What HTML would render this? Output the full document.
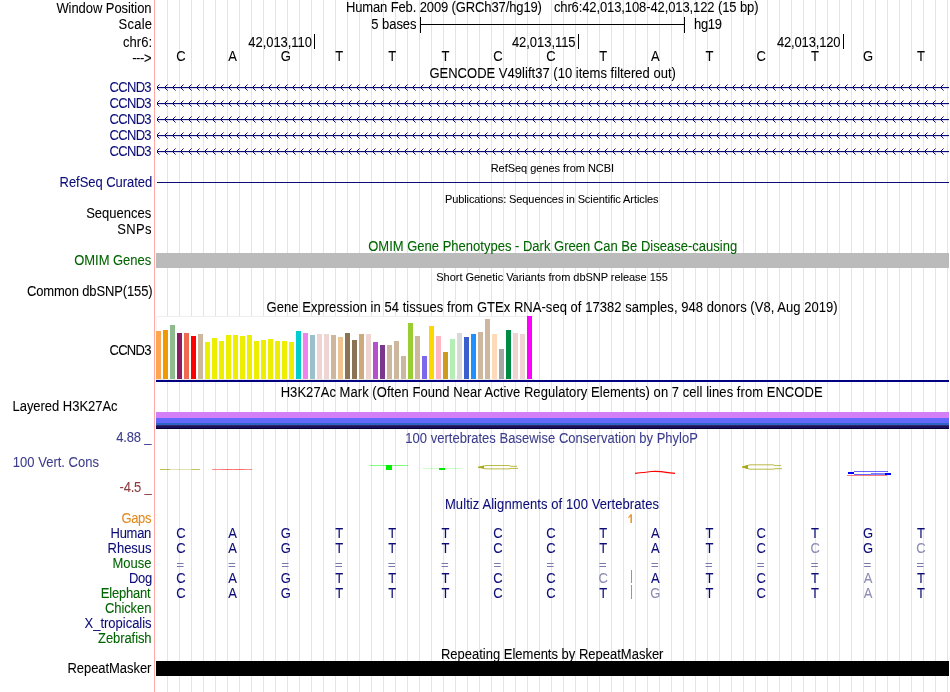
<!DOCTYPE html>
<html><head><meta charset="utf-8"><style>
html,body{margin:0;padding:0;background:#fff;width:950px;height:692px;overflow:hidden}
svg{display:block;will-change:transform}
text{font-family:"Liberation Sans",sans-serif;stroke:currentColor;stroke-width:0.06}
</style></head><body>
<svg width="950" height="692" viewBox="0 0 950 692">
<rect width="950" height="692" fill="#fff"/>
<rect x="167" y="0" width="1" height="692" fill="#e0e0ff"/><rect x="179" y="0" width="1" height="692" fill="#e0e0ff"/><rect x="191" y="0" width="1" height="692" fill="#e0e0ff"/><rect x="203" y="0" width="1" height="692" fill="#e0e0ff"/><rect x="215" y="0" width="1" height="692" fill="#e0e0ff"/><rect x="227" y="0" width="1" height="692" fill="#e0e0ff"/><rect x="239" y="0" width="1" height="692" fill="#e0e0ff"/><rect x="251" y="0" width="1" height="692" fill="#e0e0ff"/><rect x="263" y="0" width="1" height="692" fill="#e0e0ff"/><rect x="275" y="0" width="1" height="692" fill="#e0e0ff"/><rect x="287" y="0" width="1" height="692" fill="#e0e0ff"/><rect x="299" y="0" width="1" height="692" fill="#e0e0ff"/><rect x="311" y="0" width="1" height="692" fill="#e0e0ff"/><rect x="323" y="0" width="1" height="692" fill="#e0e0ff"/><rect x="335" y="0" width="1" height="692" fill="#e0e0ff"/><rect x="347" y="0" width="1" height="692" fill="#e0e0ff"/><rect x="359" y="0" width="1" height="692" fill="#e0e0ff"/><rect x="371" y="0" width="1" height="692" fill="#e0e0ff"/><rect x="383" y="0" width="1" height="692" fill="#e0e0ff"/><rect x="395" y="0" width="1" height="692" fill="#e0e0ff"/><rect x="407" y="0" width="1" height="692" fill="#e0e0ff"/><rect x="419" y="0" width="1" height="692" fill="#e0e0ff"/><rect x="431" y="0" width="1" height="692" fill="#e0e0ff"/><rect x="443" y="0" width="1" height="692" fill="#e0e0ff"/><rect x="455" y="0" width="1" height="692" fill="#e0e0ff"/><rect x="467" y="0" width="1" height="692" fill="#e0e0ff"/><rect x="479" y="0" width="1" height="692" fill="#e0e0ff"/><rect x="491" y="0" width="1" height="692" fill="#e0e0ff"/><rect x="503" y="0" width="1" height="692" fill="#e0e0ff"/><rect x="515" y="0" width="1" height="692" fill="#e0e0ff"/><rect x="527" y="0" width="1" height="692" fill="#e0e0ff"/><rect x="539" y="0" width="1" height="692" fill="#e0e0ff"/><rect x="551" y="0" width="1" height="692" fill="#e0e0ff"/><rect x="563" y="0" width="1" height="692" fill="#e0e0ff"/><rect x="575" y="0" width="1" height="692" fill="#e0e0ff"/><rect x="587" y="0" width="1" height="692" fill="#e0e0ff"/><rect x="599" y="0" width="1" height="692" fill="#e0e0ff"/><rect x="611" y="0" width="1" height="692" fill="#e0e0ff"/><rect x="623" y="0" width="1" height="692" fill="#e0e0ff"/><rect x="635" y="0" width="1" height="692" fill="#e0e0ff"/><rect x="647" y="0" width="1" height="692" fill="#e0e0ff"/><rect x="659" y="0" width="1" height="692" fill="#e0e0ff"/><rect x="671" y="0" width="1" height="692" fill="#e0e0ff"/><rect x="683" y="0" width="1" height="692" fill="#e0e0ff"/><rect x="695" y="0" width="1" height="692" fill="#e0e0ff"/><rect x="707" y="0" width="1" height="692" fill="#e0e0ff"/><rect x="719" y="0" width="1" height="692" fill="#e0e0ff"/><rect x="731" y="0" width="1" height="692" fill="#e0e0ff"/><rect x="743" y="0" width="1" height="692" fill="#e0e0ff"/><rect x="755" y="0" width="1" height="692" fill="#e0e0ff"/><rect x="767" y="0" width="1" height="692" fill="#e0e0ff"/><rect x="779" y="0" width="1" height="692" fill="#e0e0ff"/><rect x="791" y="0" width="1" height="692" fill="#e0e0ff"/><rect x="803" y="0" width="1" height="692" fill="#e0e0ff"/><rect x="815" y="0" width="1" height="692" fill="#e0e0ff"/><rect x="827" y="0" width="1" height="692" fill="#e0e0ff"/><rect x="839" y="0" width="1" height="692" fill="#e0e0ff"/><rect x="851" y="0" width="1" height="692" fill="#e0e0ff"/><rect x="863" y="0" width="1" height="692" fill="#e0e0ff"/><rect x="875" y="0" width="1" height="692" fill="#e0e0ff"/><rect x="887" y="0" width="1" height="692" fill="#e0e0ff"/><rect x="899" y="0" width="1" height="692" fill="#e0e0ff"/><rect x="911" y="0" width="1" height="692" fill="#e0e0ff"/><rect x="923" y="0" width="1" height="692" fill="#e0e0ff"/><rect x="935" y="0" width="1" height="692" fill="#e0e0ff"/><rect x="947" y="0" width="1" height="692" fill="#e0e0ff"/><rect x="154" y="0" width="1" height="692" fill="#ffa8a8"/><rect x="420" y="17" width="1" height="16" fill="#000"/><rect x="684" y="17" width="1" height="16" fill="#000"/><rect x="420" y="24" width="265" height="1" fill="#000"/><rect x="314" y="34" width="1" height="15" fill="#000"/><rect x="578" y="34" width="1" height="15" fill="#000"/><rect x="843" y="34" width="1" height="15" fill="#000"/><rect x="157" y="87" width="792" height="1" fill="#0c0c78"/><rect x="157" y="88" width="792" height="1" fill="#0c0c78" fill-opacity="0.15"/><path d="M157,86h1v3h-1zM158,85h1v1h-1zM158,89h1v1h-1zM165,86h1v3h-1zM166,85h1v1h-1zM166,89h1v1h-1zM173,86h1v3h-1zM174,85h1v1h-1zM174,89h1v1h-1zM181,86h1v3h-1zM182,85h1v1h-1zM182,89h1v1h-1zM189,86h1v3h-1zM190,85h1v1h-1zM190,89h1v1h-1zM197,86h1v3h-1zM198,85h1v1h-1zM198,89h1v1h-1zM205,86h1v3h-1zM206,85h1v1h-1zM206,89h1v1h-1zM213,86h1v3h-1zM214,85h1v1h-1zM214,89h1v1h-1zM221,86h1v3h-1zM222,85h1v1h-1zM222,89h1v1h-1zM229,86h1v3h-1zM230,85h1v1h-1zM230,89h1v1h-1zM237,86h1v3h-1zM238,85h1v1h-1zM238,89h1v1h-1zM245,86h1v3h-1zM246,85h1v1h-1zM246,89h1v1h-1zM253,86h1v3h-1zM254,85h1v1h-1zM254,89h1v1h-1zM261,86h1v3h-1zM262,85h1v1h-1zM262,89h1v1h-1zM269,86h1v3h-1zM270,85h1v1h-1zM270,89h1v1h-1zM277,86h1v3h-1zM278,85h1v1h-1zM278,89h1v1h-1zM285,86h1v3h-1zM286,85h1v1h-1zM286,89h1v1h-1zM293,86h1v3h-1zM294,85h1v1h-1zM294,89h1v1h-1zM301,86h1v3h-1zM302,85h1v1h-1zM302,89h1v1h-1zM309,86h1v3h-1zM310,85h1v1h-1zM310,89h1v1h-1zM317,86h1v3h-1zM318,85h1v1h-1zM318,89h1v1h-1zM325,86h1v3h-1zM326,85h1v1h-1zM326,89h1v1h-1zM333,86h1v3h-1zM334,85h1v1h-1zM334,89h1v1h-1zM341,86h1v3h-1zM342,85h1v1h-1zM342,89h1v1h-1zM349,86h1v3h-1zM350,85h1v1h-1zM350,89h1v1h-1zM357,86h1v3h-1zM358,85h1v1h-1zM358,89h1v1h-1zM365,86h1v3h-1zM366,85h1v1h-1zM366,89h1v1h-1zM373,86h1v3h-1zM374,85h1v1h-1zM374,89h1v1h-1zM381,86h1v3h-1zM382,85h1v1h-1zM382,89h1v1h-1zM389,86h1v3h-1zM390,85h1v1h-1zM390,89h1v1h-1zM397,86h1v3h-1zM398,85h1v1h-1zM398,89h1v1h-1zM405,86h1v3h-1zM406,85h1v1h-1zM406,89h1v1h-1zM413,86h1v3h-1zM414,85h1v1h-1zM414,89h1v1h-1zM421,86h1v3h-1zM422,85h1v1h-1zM422,89h1v1h-1zM429,86h1v3h-1zM430,85h1v1h-1zM430,89h1v1h-1zM437,86h1v3h-1zM438,85h1v1h-1zM438,89h1v1h-1zM445,86h1v3h-1zM446,85h1v1h-1zM446,89h1v1h-1zM453,86h1v3h-1zM454,85h1v1h-1zM454,89h1v1h-1zM461,86h1v3h-1zM462,85h1v1h-1zM462,89h1v1h-1zM469,86h1v3h-1zM470,85h1v1h-1zM470,89h1v1h-1zM477,86h1v3h-1zM478,85h1v1h-1zM478,89h1v1h-1zM485,86h1v3h-1zM486,85h1v1h-1zM486,89h1v1h-1zM493,86h1v3h-1zM494,85h1v1h-1zM494,89h1v1h-1zM501,86h1v3h-1zM502,85h1v1h-1zM502,89h1v1h-1zM509,86h1v3h-1zM510,85h1v1h-1zM510,89h1v1h-1zM517,86h1v3h-1zM518,85h1v1h-1zM518,89h1v1h-1zM525,86h1v3h-1zM526,85h1v1h-1zM526,89h1v1h-1zM533,86h1v3h-1zM534,85h1v1h-1zM534,89h1v1h-1zM541,86h1v3h-1zM542,85h1v1h-1zM542,89h1v1h-1zM549,86h1v3h-1zM550,85h1v1h-1zM550,89h1v1h-1zM557,86h1v3h-1zM558,85h1v1h-1zM558,89h1v1h-1zM565,86h1v3h-1zM566,85h1v1h-1zM566,89h1v1h-1zM573,86h1v3h-1zM574,85h1v1h-1zM574,89h1v1h-1zM581,86h1v3h-1zM582,85h1v1h-1zM582,89h1v1h-1zM589,86h1v3h-1zM590,85h1v1h-1zM590,89h1v1h-1zM597,86h1v3h-1zM598,85h1v1h-1zM598,89h1v1h-1zM605,86h1v3h-1zM606,85h1v1h-1zM606,89h1v1h-1zM613,86h1v3h-1zM614,85h1v1h-1zM614,89h1v1h-1zM621,86h1v3h-1zM622,85h1v1h-1zM622,89h1v1h-1zM629,86h1v3h-1zM630,85h1v1h-1zM630,89h1v1h-1zM637,86h1v3h-1zM638,85h1v1h-1zM638,89h1v1h-1zM645,86h1v3h-1zM646,85h1v1h-1zM646,89h1v1h-1zM653,86h1v3h-1zM654,85h1v1h-1zM654,89h1v1h-1zM661,86h1v3h-1zM662,85h1v1h-1zM662,89h1v1h-1zM669,86h1v3h-1zM670,85h1v1h-1zM670,89h1v1h-1zM677,86h1v3h-1zM678,85h1v1h-1zM678,89h1v1h-1zM685,86h1v3h-1zM686,85h1v1h-1zM686,89h1v1h-1zM693,86h1v3h-1zM694,85h1v1h-1zM694,89h1v1h-1zM701,86h1v3h-1zM702,85h1v1h-1zM702,89h1v1h-1zM709,86h1v3h-1zM710,85h1v1h-1zM710,89h1v1h-1zM717,86h1v3h-1zM718,85h1v1h-1zM718,89h1v1h-1zM725,86h1v3h-1zM726,85h1v1h-1zM726,89h1v1h-1zM733,86h1v3h-1zM734,85h1v1h-1zM734,89h1v1h-1zM741,86h1v3h-1zM742,85h1v1h-1zM742,89h1v1h-1zM749,86h1v3h-1zM750,85h1v1h-1zM750,89h1v1h-1zM757,86h1v3h-1zM758,85h1v1h-1zM758,89h1v1h-1zM765,86h1v3h-1zM766,85h1v1h-1zM766,89h1v1h-1zM773,86h1v3h-1zM774,85h1v1h-1zM774,89h1v1h-1zM781,86h1v3h-1zM782,85h1v1h-1zM782,89h1v1h-1zM789,86h1v3h-1zM790,85h1v1h-1zM790,89h1v1h-1zM797,86h1v3h-1zM798,85h1v1h-1zM798,89h1v1h-1zM805,86h1v3h-1zM806,85h1v1h-1zM806,89h1v1h-1zM813,86h1v3h-1zM814,85h1v1h-1zM814,89h1v1h-1zM821,86h1v3h-1zM822,85h1v1h-1zM822,89h1v1h-1zM829,86h1v3h-1zM830,85h1v1h-1zM830,89h1v1h-1zM837,86h1v3h-1zM838,85h1v1h-1zM838,89h1v1h-1zM845,86h1v3h-1zM846,85h1v1h-1zM846,89h1v1h-1zM853,86h1v3h-1zM854,85h1v1h-1zM854,89h1v1h-1zM861,86h1v3h-1zM862,85h1v1h-1zM862,89h1v1h-1zM869,86h1v3h-1zM870,85h1v1h-1zM870,89h1v1h-1zM877,86h1v3h-1zM878,85h1v1h-1zM878,89h1v1h-1zM885,86h1v3h-1zM886,85h1v1h-1zM886,89h1v1h-1zM893,86h1v3h-1zM894,85h1v1h-1zM894,89h1v1h-1zM901,86h1v3h-1zM902,85h1v1h-1zM902,89h1v1h-1zM909,86h1v3h-1zM910,85h1v1h-1zM910,89h1v1h-1zM917,86h1v3h-1zM918,85h1v1h-1zM918,89h1v1h-1zM925,86h1v3h-1zM926,85h1v1h-1zM926,89h1v1h-1zM933,86h1v3h-1zM934,85h1v1h-1zM934,89h1v1h-1zM941,86h1v3h-1zM942,85h1v1h-1zM942,89h1v1h-1z" fill="#0c0c78"/><path d="M159,84h1v1h-1zM159,90h1v1h-1zM167,84h1v1h-1zM167,90h1v1h-1zM175,84h1v1h-1zM175,90h1v1h-1zM183,84h1v1h-1zM183,90h1v1h-1zM191,84h1v1h-1zM191,90h1v1h-1zM199,84h1v1h-1zM199,90h1v1h-1zM207,84h1v1h-1zM207,90h1v1h-1zM215,84h1v1h-1zM215,90h1v1h-1zM223,84h1v1h-1zM223,90h1v1h-1zM231,84h1v1h-1zM231,90h1v1h-1zM239,84h1v1h-1zM239,90h1v1h-1zM247,84h1v1h-1zM247,90h1v1h-1zM255,84h1v1h-1zM255,90h1v1h-1zM263,84h1v1h-1zM263,90h1v1h-1zM271,84h1v1h-1zM271,90h1v1h-1zM279,84h1v1h-1zM279,90h1v1h-1zM287,84h1v1h-1zM287,90h1v1h-1zM295,84h1v1h-1zM295,90h1v1h-1zM303,84h1v1h-1zM303,90h1v1h-1zM311,84h1v1h-1zM311,90h1v1h-1zM319,84h1v1h-1zM319,90h1v1h-1zM327,84h1v1h-1zM327,90h1v1h-1zM335,84h1v1h-1zM335,90h1v1h-1zM343,84h1v1h-1zM343,90h1v1h-1zM351,84h1v1h-1zM351,90h1v1h-1zM359,84h1v1h-1zM359,90h1v1h-1zM367,84h1v1h-1zM367,90h1v1h-1zM375,84h1v1h-1zM375,90h1v1h-1zM383,84h1v1h-1zM383,90h1v1h-1zM391,84h1v1h-1zM391,90h1v1h-1zM399,84h1v1h-1zM399,90h1v1h-1zM407,84h1v1h-1zM407,90h1v1h-1zM415,84h1v1h-1zM415,90h1v1h-1zM423,84h1v1h-1zM423,90h1v1h-1zM431,84h1v1h-1zM431,90h1v1h-1zM439,84h1v1h-1zM439,90h1v1h-1zM447,84h1v1h-1zM447,90h1v1h-1zM455,84h1v1h-1zM455,90h1v1h-1zM463,84h1v1h-1zM463,90h1v1h-1zM471,84h1v1h-1zM471,90h1v1h-1zM479,84h1v1h-1zM479,90h1v1h-1zM487,84h1v1h-1zM487,90h1v1h-1zM495,84h1v1h-1zM495,90h1v1h-1zM503,84h1v1h-1zM503,90h1v1h-1zM511,84h1v1h-1zM511,90h1v1h-1zM519,84h1v1h-1zM519,90h1v1h-1zM527,84h1v1h-1zM527,90h1v1h-1zM535,84h1v1h-1zM535,90h1v1h-1zM543,84h1v1h-1zM543,90h1v1h-1zM551,84h1v1h-1zM551,90h1v1h-1zM559,84h1v1h-1zM559,90h1v1h-1zM567,84h1v1h-1zM567,90h1v1h-1zM575,84h1v1h-1zM575,90h1v1h-1zM583,84h1v1h-1zM583,90h1v1h-1zM591,84h1v1h-1zM591,90h1v1h-1zM599,84h1v1h-1zM599,90h1v1h-1zM607,84h1v1h-1zM607,90h1v1h-1zM615,84h1v1h-1zM615,90h1v1h-1zM623,84h1v1h-1zM623,90h1v1h-1zM631,84h1v1h-1zM631,90h1v1h-1zM639,84h1v1h-1zM639,90h1v1h-1zM647,84h1v1h-1zM647,90h1v1h-1zM655,84h1v1h-1zM655,90h1v1h-1zM663,84h1v1h-1zM663,90h1v1h-1zM671,84h1v1h-1zM671,90h1v1h-1zM679,84h1v1h-1zM679,90h1v1h-1zM687,84h1v1h-1zM687,90h1v1h-1zM695,84h1v1h-1zM695,90h1v1h-1zM703,84h1v1h-1zM703,90h1v1h-1zM711,84h1v1h-1zM711,90h1v1h-1zM719,84h1v1h-1zM719,90h1v1h-1zM727,84h1v1h-1zM727,90h1v1h-1zM735,84h1v1h-1zM735,90h1v1h-1zM743,84h1v1h-1zM743,90h1v1h-1zM751,84h1v1h-1zM751,90h1v1h-1zM759,84h1v1h-1zM759,90h1v1h-1zM767,84h1v1h-1zM767,90h1v1h-1zM775,84h1v1h-1zM775,90h1v1h-1zM783,84h1v1h-1zM783,90h1v1h-1zM791,84h1v1h-1zM791,90h1v1h-1zM799,84h1v1h-1zM799,90h1v1h-1zM807,84h1v1h-1zM807,90h1v1h-1zM815,84h1v1h-1zM815,90h1v1h-1zM823,84h1v1h-1zM823,90h1v1h-1zM831,84h1v1h-1zM831,90h1v1h-1zM839,84h1v1h-1zM839,90h1v1h-1zM847,84h1v1h-1zM847,90h1v1h-1zM855,84h1v1h-1zM855,90h1v1h-1zM863,84h1v1h-1zM863,90h1v1h-1zM871,84h1v1h-1zM871,90h1v1h-1zM879,84h1v1h-1zM879,90h1v1h-1zM887,84h1v1h-1zM887,90h1v1h-1zM895,84h1v1h-1zM895,90h1v1h-1zM903,84h1v1h-1zM903,90h1v1h-1zM911,84h1v1h-1zM911,90h1v1h-1zM919,84h1v1h-1zM919,90h1v1h-1zM927,84h1v1h-1zM927,90h1v1h-1zM935,84h1v1h-1zM935,90h1v1h-1zM943,84h1v1h-1zM943,90h1v1h-1z" fill="#0c0c78" fill-opacity="0.55"/><rect x="157" y="103" width="792" height="1" fill="#0c0c78"/><rect x="157" y="104" width="792" height="1" fill="#0c0c78" fill-opacity="0.15"/><path d="M157,102h1v3h-1zM158,101h1v1h-1zM158,105h1v1h-1zM165,102h1v3h-1zM166,101h1v1h-1zM166,105h1v1h-1zM173,102h1v3h-1zM174,101h1v1h-1zM174,105h1v1h-1zM181,102h1v3h-1zM182,101h1v1h-1zM182,105h1v1h-1zM189,102h1v3h-1zM190,101h1v1h-1zM190,105h1v1h-1zM197,102h1v3h-1zM198,101h1v1h-1zM198,105h1v1h-1zM205,102h1v3h-1zM206,101h1v1h-1zM206,105h1v1h-1zM213,102h1v3h-1zM214,101h1v1h-1zM214,105h1v1h-1zM221,102h1v3h-1zM222,101h1v1h-1zM222,105h1v1h-1zM229,102h1v3h-1zM230,101h1v1h-1zM230,105h1v1h-1zM237,102h1v3h-1zM238,101h1v1h-1zM238,105h1v1h-1zM245,102h1v3h-1zM246,101h1v1h-1zM246,105h1v1h-1zM253,102h1v3h-1zM254,101h1v1h-1zM254,105h1v1h-1zM261,102h1v3h-1zM262,101h1v1h-1zM262,105h1v1h-1zM269,102h1v3h-1zM270,101h1v1h-1zM270,105h1v1h-1zM277,102h1v3h-1zM278,101h1v1h-1zM278,105h1v1h-1zM285,102h1v3h-1zM286,101h1v1h-1zM286,105h1v1h-1zM293,102h1v3h-1zM294,101h1v1h-1zM294,105h1v1h-1zM301,102h1v3h-1zM302,101h1v1h-1zM302,105h1v1h-1zM309,102h1v3h-1zM310,101h1v1h-1zM310,105h1v1h-1zM317,102h1v3h-1zM318,101h1v1h-1zM318,105h1v1h-1zM325,102h1v3h-1zM326,101h1v1h-1zM326,105h1v1h-1zM333,102h1v3h-1zM334,101h1v1h-1zM334,105h1v1h-1zM341,102h1v3h-1zM342,101h1v1h-1zM342,105h1v1h-1zM349,102h1v3h-1zM350,101h1v1h-1zM350,105h1v1h-1zM357,102h1v3h-1zM358,101h1v1h-1zM358,105h1v1h-1zM365,102h1v3h-1zM366,101h1v1h-1zM366,105h1v1h-1zM373,102h1v3h-1zM374,101h1v1h-1zM374,105h1v1h-1zM381,102h1v3h-1zM382,101h1v1h-1zM382,105h1v1h-1zM389,102h1v3h-1zM390,101h1v1h-1zM390,105h1v1h-1zM397,102h1v3h-1zM398,101h1v1h-1zM398,105h1v1h-1zM405,102h1v3h-1zM406,101h1v1h-1zM406,105h1v1h-1zM413,102h1v3h-1zM414,101h1v1h-1zM414,105h1v1h-1zM421,102h1v3h-1zM422,101h1v1h-1zM422,105h1v1h-1zM429,102h1v3h-1zM430,101h1v1h-1zM430,105h1v1h-1zM437,102h1v3h-1zM438,101h1v1h-1zM438,105h1v1h-1zM445,102h1v3h-1zM446,101h1v1h-1zM446,105h1v1h-1zM453,102h1v3h-1zM454,101h1v1h-1zM454,105h1v1h-1zM461,102h1v3h-1zM462,101h1v1h-1zM462,105h1v1h-1zM469,102h1v3h-1zM470,101h1v1h-1zM470,105h1v1h-1zM477,102h1v3h-1zM478,101h1v1h-1zM478,105h1v1h-1zM485,102h1v3h-1zM486,101h1v1h-1zM486,105h1v1h-1zM493,102h1v3h-1zM494,101h1v1h-1zM494,105h1v1h-1zM501,102h1v3h-1zM502,101h1v1h-1zM502,105h1v1h-1zM509,102h1v3h-1zM510,101h1v1h-1zM510,105h1v1h-1zM517,102h1v3h-1zM518,101h1v1h-1zM518,105h1v1h-1zM525,102h1v3h-1zM526,101h1v1h-1zM526,105h1v1h-1zM533,102h1v3h-1zM534,101h1v1h-1zM534,105h1v1h-1zM541,102h1v3h-1zM542,101h1v1h-1zM542,105h1v1h-1zM549,102h1v3h-1zM550,101h1v1h-1zM550,105h1v1h-1zM557,102h1v3h-1zM558,101h1v1h-1zM558,105h1v1h-1zM565,102h1v3h-1zM566,101h1v1h-1zM566,105h1v1h-1zM573,102h1v3h-1zM574,101h1v1h-1zM574,105h1v1h-1zM581,102h1v3h-1zM582,101h1v1h-1zM582,105h1v1h-1zM589,102h1v3h-1zM590,101h1v1h-1zM590,105h1v1h-1zM597,102h1v3h-1zM598,101h1v1h-1zM598,105h1v1h-1zM605,102h1v3h-1zM606,101h1v1h-1zM606,105h1v1h-1zM613,102h1v3h-1zM614,101h1v1h-1zM614,105h1v1h-1zM621,102h1v3h-1zM622,101h1v1h-1zM622,105h1v1h-1zM629,102h1v3h-1zM630,101h1v1h-1zM630,105h1v1h-1zM637,102h1v3h-1zM638,101h1v1h-1zM638,105h1v1h-1zM645,102h1v3h-1zM646,101h1v1h-1zM646,105h1v1h-1zM653,102h1v3h-1zM654,101h1v1h-1zM654,105h1v1h-1zM661,102h1v3h-1zM662,101h1v1h-1zM662,105h1v1h-1zM669,102h1v3h-1zM670,101h1v1h-1zM670,105h1v1h-1zM677,102h1v3h-1zM678,101h1v1h-1zM678,105h1v1h-1zM685,102h1v3h-1zM686,101h1v1h-1zM686,105h1v1h-1zM693,102h1v3h-1zM694,101h1v1h-1zM694,105h1v1h-1zM701,102h1v3h-1zM702,101h1v1h-1zM702,105h1v1h-1zM709,102h1v3h-1zM710,101h1v1h-1zM710,105h1v1h-1zM717,102h1v3h-1zM718,101h1v1h-1zM718,105h1v1h-1zM725,102h1v3h-1zM726,101h1v1h-1zM726,105h1v1h-1zM733,102h1v3h-1zM734,101h1v1h-1zM734,105h1v1h-1zM741,102h1v3h-1zM742,101h1v1h-1zM742,105h1v1h-1zM749,102h1v3h-1zM750,101h1v1h-1zM750,105h1v1h-1zM757,102h1v3h-1zM758,101h1v1h-1zM758,105h1v1h-1zM765,102h1v3h-1zM766,101h1v1h-1zM766,105h1v1h-1zM773,102h1v3h-1zM774,101h1v1h-1zM774,105h1v1h-1zM781,102h1v3h-1zM782,101h1v1h-1zM782,105h1v1h-1zM789,102h1v3h-1zM790,101h1v1h-1zM790,105h1v1h-1zM797,102h1v3h-1zM798,101h1v1h-1zM798,105h1v1h-1zM805,102h1v3h-1zM806,101h1v1h-1zM806,105h1v1h-1zM813,102h1v3h-1zM814,101h1v1h-1zM814,105h1v1h-1zM821,102h1v3h-1zM822,101h1v1h-1zM822,105h1v1h-1zM829,102h1v3h-1zM830,101h1v1h-1zM830,105h1v1h-1zM837,102h1v3h-1zM838,101h1v1h-1zM838,105h1v1h-1zM845,102h1v3h-1zM846,101h1v1h-1zM846,105h1v1h-1zM853,102h1v3h-1zM854,101h1v1h-1zM854,105h1v1h-1zM861,102h1v3h-1zM862,101h1v1h-1zM862,105h1v1h-1zM869,102h1v3h-1zM870,101h1v1h-1zM870,105h1v1h-1zM877,102h1v3h-1zM878,101h1v1h-1zM878,105h1v1h-1zM885,102h1v3h-1zM886,101h1v1h-1zM886,105h1v1h-1zM893,102h1v3h-1zM894,101h1v1h-1zM894,105h1v1h-1zM901,102h1v3h-1zM902,101h1v1h-1zM902,105h1v1h-1zM909,102h1v3h-1zM910,101h1v1h-1zM910,105h1v1h-1zM917,102h1v3h-1zM918,101h1v1h-1zM918,105h1v1h-1zM925,102h1v3h-1zM926,101h1v1h-1zM926,105h1v1h-1zM933,102h1v3h-1zM934,101h1v1h-1zM934,105h1v1h-1zM941,102h1v3h-1zM942,101h1v1h-1zM942,105h1v1h-1z" fill="#0c0c78"/><path d="M159,100h1v1h-1zM159,106h1v1h-1zM167,100h1v1h-1zM167,106h1v1h-1zM175,100h1v1h-1zM175,106h1v1h-1zM183,100h1v1h-1zM183,106h1v1h-1zM191,100h1v1h-1zM191,106h1v1h-1zM199,100h1v1h-1zM199,106h1v1h-1zM207,100h1v1h-1zM207,106h1v1h-1zM215,100h1v1h-1zM215,106h1v1h-1zM223,100h1v1h-1zM223,106h1v1h-1zM231,100h1v1h-1zM231,106h1v1h-1zM239,100h1v1h-1zM239,106h1v1h-1zM247,100h1v1h-1zM247,106h1v1h-1zM255,100h1v1h-1zM255,106h1v1h-1zM263,100h1v1h-1zM263,106h1v1h-1zM271,100h1v1h-1zM271,106h1v1h-1zM279,100h1v1h-1zM279,106h1v1h-1zM287,100h1v1h-1zM287,106h1v1h-1zM295,100h1v1h-1zM295,106h1v1h-1zM303,100h1v1h-1zM303,106h1v1h-1zM311,100h1v1h-1zM311,106h1v1h-1zM319,100h1v1h-1zM319,106h1v1h-1zM327,100h1v1h-1zM327,106h1v1h-1zM335,100h1v1h-1zM335,106h1v1h-1zM343,100h1v1h-1zM343,106h1v1h-1zM351,100h1v1h-1zM351,106h1v1h-1zM359,100h1v1h-1zM359,106h1v1h-1zM367,100h1v1h-1zM367,106h1v1h-1zM375,100h1v1h-1zM375,106h1v1h-1zM383,100h1v1h-1zM383,106h1v1h-1zM391,100h1v1h-1zM391,106h1v1h-1zM399,100h1v1h-1zM399,106h1v1h-1zM407,100h1v1h-1zM407,106h1v1h-1zM415,100h1v1h-1zM415,106h1v1h-1zM423,100h1v1h-1zM423,106h1v1h-1zM431,100h1v1h-1zM431,106h1v1h-1zM439,100h1v1h-1zM439,106h1v1h-1zM447,100h1v1h-1zM447,106h1v1h-1zM455,100h1v1h-1zM455,106h1v1h-1zM463,100h1v1h-1zM463,106h1v1h-1zM471,100h1v1h-1zM471,106h1v1h-1zM479,100h1v1h-1zM479,106h1v1h-1zM487,100h1v1h-1zM487,106h1v1h-1zM495,100h1v1h-1zM495,106h1v1h-1zM503,100h1v1h-1zM503,106h1v1h-1zM511,100h1v1h-1zM511,106h1v1h-1zM519,100h1v1h-1zM519,106h1v1h-1zM527,100h1v1h-1zM527,106h1v1h-1zM535,100h1v1h-1zM535,106h1v1h-1zM543,100h1v1h-1zM543,106h1v1h-1zM551,100h1v1h-1zM551,106h1v1h-1zM559,100h1v1h-1zM559,106h1v1h-1zM567,100h1v1h-1zM567,106h1v1h-1zM575,100h1v1h-1zM575,106h1v1h-1zM583,100h1v1h-1zM583,106h1v1h-1zM591,100h1v1h-1zM591,106h1v1h-1zM599,100h1v1h-1zM599,106h1v1h-1zM607,100h1v1h-1zM607,106h1v1h-1zM615,100h1v1h-1zM615,106h1v1h-1zM623,100h1v1h-1zM623,106h1v1h-1zM631,100h1v1h-1zM631,106h1v1h-1zM639,100h1v1h-1zM639,106h1v1h-1zM647,100h1v1h-1zM647,106h1v1h-1zM655,100h1v1h-1zM655,106h1v1h-1zM663,100h1v1h-1zM663,106h1v1h-1zM671,100h1v1h-1zM671,106h1v1h-1zM679,100h1v1h-1zM679,106h1v1h-1zM687,100h1v1h-1zM687,106h1v1h-1zM695,100h1v1h-1zM695,106h1v1h-1zM703,100h1v1h-1zM703,106h1v1h-1zM711,100h1v1h-1zM711,106h1v1h-1zM719,100h1v1h-1zM719,106h1v1h-1zM727,100h1v1h-1zM727,106h1v1h-1zM735,100h1v1h-1zM735,106h1v1h-1zM743,100h1v1h-1zM743,106h1v1h-1zM751,100h1v1h-1zM751,106h1v1h-1zM759,100h1v1h-1zM759,106h1v1h-1zM767,100h1v1h-1zM767,106h1v1h-1zM775,100h1v1h-1zM775,106h1v1h-1zM783,100h1v1h-1zM783,106h1v1h-1zM791,100h1v1h-1zM791,106h1v1h-1zM799,100h1v1h-1zM799,106h1v1h-1zM807,100h1v1h-1zM807,106h1v1h-1zM815,100h1v1h-1zM815,106h1v1h-1zM823,100h1v1h-1zM823,106h1v1h-1zM831,100h1v1h-1zM831,106h1v1h-1zM839,100h1v1h-1zM839,106h1v1h-1zM847,100h1v1h-1zM847,106h1v1h-1zM855,100h1v1h-1zM855,106h1v1h-1zM863,100h1v1h-1zM863,106h1v1h-1zM871,100h1v1h-1zM871,106h1v1h-1zM879,100h1v1h-1zM879,106h1v1h-1zM887,100h1v1h-1zM887,106h1v1h-1zM895,100h1v1h-1zM895,106h1v1h-1zM903,100h1v1h-1zM903,106h1v1h-1zM911,100h1v1h-1zM911,106h1v1h-1zM919,100h1v1h-1zM919,106h1v1h-1zM927,100h1v1h-1zM927,106h1v1h-1zM935,100h1v1h-1zM935,106h1v1h-1zM943,100h1v1h-1zM943,106h1v1h-1z" fill="#0c0c78" fill-opacity="0.55"/><rect x="157" y="119" width="792" height="1" fill="#0c0c78"/><rect x="157" y="120" width="792" height="1" fill="#0c0c78" fill-opacity="0.15"/><path d="M157,118h1v3h-1zM158,117h1v1h-1zM158,121h1v1h-1zM165,118h1v3h-1zM166,117h1v1h-1zM166,121h1v1h-1zM173,118h1v3h-1zM174,117h1v1h-1zM174,121h1v1h-1zM181,118h1v3h-1zM182,117h1v1h-1zM182,121h1v1h-1zM189,118h1v3h-1zM190,117h1v1h-1zM190,121h1v1h-1zM197,118h1v3h-1zM198,117h1v1h-1zM198,121h1v1h-1zM205,118h1v3h-1zM206,117h1v1h-1zM206,121h1v1h-1zM213,118h1v3h-1zM214,117h1v1h-1zM214,121h1v1h-1zM221,118h1v3h-1zM222,117h1v1h-1zM222,121h1v1h-1zM229,118h1v3h-1zM230,117h1v1h-1zM230,121h1v1h-1zM237,118h1v3h-1zM238,117h1v1h-1zM238,121h1v1h-1zM245,118h1v3h-1zM246,117h1v1h-1zM246,121h1v1h-1zM253,118h1v3h-1zM254,117h1v1h-1zM254,121h1v1h-1zM261,118h1v3h-1zM262,117h1v1h-1zM262,121h1v1h-1zM269,118h1v3h-1zM270,117h1v1h-1zM270,121h1v1h-1zM277,118h1v3h-1zM278,117h1v1h-1zM278,121h1v1h-1zM285,118h1v3h-1zM286,117h1v1h-1zM286,121h1v1h-1zM293,118h1v3h-1zM294,117h1v1h-1zM294,121h1v1h-1zM301,118h1v3h-1zM302,117h1v1h-1zM302,121h1v1h-1zM309,118h1v3h-1zM310,117h1v1h-1zM310,121h1v1h-1zM317,118h1v3h-1zM318,117h1v1h-1zM318,121h1v1h-1zM325,118h1v3h-1zM326,117h1v1h-1zM326,121h1v1h-1zM333,118h1v3h-1zM334,117h1v1h-1zM334,121h1v1h-1zM341,118h1v3h-1zM342,117h1v1h-1zM342,121h1v1h-1zM349,118h1v3h-1zM350,117h1v1h-1zM350,121h1v1h-1zM357,118h1v3h-1zM358,117h1v1h-1zM358,121h1v1h-1zM365,118h1v3h-1zM366,117h1v1h-1zM366,121h1v1h-1zM373,118h1v3h-1zM374,117h1v1h-1zM374,121h1v1h-1zM381,118h1v3h-1zM382,117h1v1h-1zM382,121h1v1h-1zM389,118h1v3h-1zM390,117h1v1h-1zM390,121h1v1h-1zM397,118h1v3h-1zM398,117h1v1h-1zM398,121h1v1h-1zM405,118h1v3h-1zM406,117h1v1h-1zM406,121h1v1h-1zM413,118h1v3h-1zM414,117h1v1h-1zM414,121h1v1h-1zM421,118h1v3h-1zM422,117h1v1h-1zM422,121h1v1h-1zM429,118h1v3h-1zM430,117h1v1h-1zM430,121h1v1h-1zM437,118h1v3h-1zM438,117h1v1h-1zM438,121h1v1h-1zM445,118h1v3h-1zM446,117h1v1h-1zM446,121h1v1h-1zM453,118h1v3h-1zM454,117h1v1h-1zM454,121h1v1h-1zM461,118h1v3h-1zM462,117h1v1h-1zM462,121h1v1h-1zM469,118h1v3h-1zM470,117h1v1h-1zM470,121h1v1h-1zM477,118h1v3h-1zM478,117h1v1h-1zM478,121h1v1h-1zM485,118h1v3h-1zM486,117h1v1h-1zM486,121h1v1h-1zM493,118h1v3h-1zM494,117h1v1h-1zM494,121h1v1h-1zM501,118h1v3h-1zM502,117h1v1h-1zM502,121h1v1h-1zM509,118h1v3h-1zM510,117h1v1h-1zM510,121h1v1h-1zM517,118h1v3h-1zM518,117h1v1h-1zM518,121h1v1h-1zM525,118h1v3h-1zM526,117h1v1h-1zM526,121h1v1h-1zM533,118h1v3h-1zM534,117h1v1h-1zM534,121h1v1h-1zM541,118h1v3h-1zM542,117h1v1h-1zM542,121h1v1h-1zM549,118h1v3h-1zM550,117h1v1h-1zM550,121h1v1h-1zM557,118h1v3h-1zM558,117h1v1h-1zM558,121h1v1h-1zM565,118h1v3h-1zM566,117h1v1h-1zM566,121h1v1h-1zM573,118h1v3h-1zM574,117h1v1h-1zM574,121h1v1h-1zM581,118h1v3h-1zM582,117h1v1h-1zM582,121h1v1h-1zM589,118h1v3h-1zM590,117h1v1h-1zM590,121h1v1h-1zM597,118h1v3h-1zM598,117h1v1h-1zM598,121h1v1h-1zM605,118h1v3h-1zM606,117h1v1h-1zM606,121h1v1h-1zM613,118h1v3h-1zM614,117h1v1h-1zM614,121h1v1h-1zM621,118h1v3h-1zM622,117h1v1h-1zM622,121h1v1h-1zM629,118h1v3h-1zM630,117h1v1h-1zM630,121h1v1h-1zM637,118h1v3h-1zM638,117h1v1h-1zM638,121h1v1h-1zM645,118h1v3h-1zM646,117h1v1h-1zM646,121h1v1h-1zM653,118h1v3h-1zM654,117h1v1h-1zM654,121h1v1h-1zM661,118h1v3h-1zM662,117h1v1h-1zM662,121h1v1h-1zM669,118h1v3h-1zM670,117h1v1h-1zM670,121h1v1h-1zM677,118h1v3h-1zM678,117h1v1h-1zM678,121h1v1h-1zM685,118h1v3h-1zM686,117h1v1h-1zM686,121h1v1h-1zM693,118h1v3h-1zM694,117h1v1h-1zM694,121h1v1h-1zM701,118h1v3h-1zM702,117h1v1h-1zM702,121h1v1h-1zM709,118h1v3h-1zM710,117h1v1h-1zM710,121h1v1h-1zM717,118h1v3h-1zM718,117h1v1h-1zM718,121h1v1h-1zM725,118h1v3h-1zM726,117h1v1h-1zM726,121h1v1h-1zM733,118h1v3h-1zM734,117h1v1h-1zM734,121h1v1h-1zM741,118h1v3h-1zM742,117h1v1h-1zM742,121h1v1h-1zM749,118h1v3h-1zM750,117h1v1h-1zM750,121h1v1h-1zM757,118h1v3h-1zM758,117h1v1h-1zM758,121h1v1h-1zM765,118h1v3h-1zM766,117h1v1h-1zM766,121h1v1h-1zM773,118h1v3h-1zM774,117h1v1h-1zM774,121h1v1h-1zM781,118h1v3h-1zM782,117h1v1h-1zM782,121h1v1h-1zM789,118h1v3h-1zM790,117h1v1h-1zM790,121h1v1h-1zM797,118h1v3h-1zM798,117h1v1h-1zM798,121h1v1h-1zM805,118h1v3h-1zM806,117h1v1h-1zM806,121h1v1h-1zM813,118h1v3h-1zM814,117h1v1h-1zM814,121h1v1h-1zM821,118h1v3h-1zM822,117h1v1h-1zM822,121h1v1h-1zM829,118h1v3h-1zM830,117h1v1h-1zM830,121h1v1h-1zM837,118h1v3h-1zM838,117h1v1h-1zM838,121h1v1h-1zM845,118h1v3h-1zM846,117h1v1h-1zM846,121h1v1h-1zM853,118h1v3h-1zM854,117h1v1h-1zM854,121h1v1h-1zM861,118h1v3h-1zM862,117h1v1h-1zM862,121h1v1h-1zM869,118h1v3h-1zM870,117h1v1h-1zM870,121h1v1h-1zM877,118h1v3h-1zM878,117h1v1h-1zM878,121h1v1h-1zM885,118h1v3h-1zM886,117h1v1h-1zM886,121h1v1h-1zM893,118h1v3h-1zM894,117h1v1h-1zM894,121h1v1h-1zM901,118h1v3h-1zM902,117h1v1h-1zM902,121h1v1h-1zM909,118h1v3h-1zM910,117h1v1h-1zM910,121h1v1h-1zM917,118h1v3h-1zM918,117h1v1h-1zM918,121h1v1h-1zM925,118h1v3h-1zM926,117h1v1h-1zM926,121h1v1h-1zM933,118h1v3h-1zM934,117h1v1h-1zM934,121h1v1h-1zM941,118h1v3h-1zM942,117h1v1h-1zM942,121h1v1h-1z" fill="#0c0c78"/><path d="M159,116h1v1h-1zM159,122h1v1h-1zM167,116h1v1h-1zM167,122h1v1h-1zM175,116h1v1h-1zM175,122h1v1h-1zM183,116h1v1h-1zM183,122h1v1h-1zM191,116h1v1h-1zM191,122h1v1h-1zM199,116h1v1h-1zM199,122h1v1h-1zM207,116h1v1h-1zM207,122h1v1h-1zM215,116h1v1h-1zM215,122h1v1h-1zM223,116h1v1h-1zM223,122h1v1h-1zM231,116h1v1h-1zM231,122h1v1h-1zM239,116h1v1h-1zM239,122h1v1h-1zM247,116h1v1h-1zM247,122h1v1h-1zM255,116h1v1h-1zM255,122h1v1h-1zM263,116h1v1h-1zM263,122h1v1h-1zM271,116h1v1h-1zM271,122h1v1h-1zM279,116h1v1h-1zM279,122h1v1h-1zM287,116h1v1h-1zM287,122h1v1h-1zM295,116h1v1h-1zM295,122h1v1h-1zM303,116h1v1h-1zM303,122h1v1h-1zM311,116h1v1h-1zM311,122h1v1h-1zM319,116h1v1h-1zM319,122h1v1h-1zM327,116h1v1h-1zM327,122h1v1h-1zM335,116h1v1h-1zM335,122h1v1h-1zM343,116h1v1h-1zM343,122h1v1h-1zM351,116h1v1h-1zM351,122h1v1h-1zM359,116h1v1h-1zM359,122h1v1h-1zM367,116h1v1h-1zM367,122h1v1h-1zM375,116h1v1h-1zM375,122h1v1h-1zM383,116h1v1h-1zM383,122h1v1h-1zM391,116h1v1h-1zM391,122h1v1h-1zM399,116h1v1h-1zM399,122h1v1h-1zM407,116h1v1h-1zM407,122h1v1h-1zM415,116h1v1h-1zM415,122h1v1h-1zM423,116h1v1h-1zM423,122h1v1h-1zM431,116h1v1h-1zM431,122h1v1h-1zM439,116h1v1h-1zM439,122h1v1h-1zM447,116h1v1h-1zM447,122h1v1h-1zM455,116h1v1h-1zM455,122h1v1h-1zM463,116h1v1h-1zM463,122h1v1h-1zM471,116h1v1h-1zM471,122h1v1h-1zM479,116h1v1h-1zM479,122h1v1h-1zM487,116h1v1h-1zM487,122h1v1h-1zM495,116h1v1h-1zM495,122h1v1h-1zM503,116h1v1h-1zM503,122h1v1h-1zM511,116h1v1h-1zM511,122h1v1h-1zM519,116h1v1h-1zM519,122h1v1h-1zM527,116h1v1h-1zM527,122h1v1h-1zM535,116h1v1h-1zM535,122h1v1h-1zM543,116h1v1h-1zM543,122h1v1h-1zM551,116h1v1h-1zM551,122h1v1h-1zM559,116h1v1h-1zM559,122h1v1h-1zM567,116h1v1h-1zM567,122h1v1h-1zM575,116h1v1h-1zM575,122h1v1h-1zM583,116h1v1h-1zM583,122h1v1h-1zM591,116h1v1h-1zM591,122h1v1h-1zM599,116h1v1h-1zM599,122h1v1h-1zM607,116h1v1h-1zM607,122h1v1h-1zM615,116h1v1h-1zM615,122h1v1h-1zM623,116h1v1h-1zM623,122h1v1h-1zM631,116h1v1h-1zM631,122h1v1h-1zM639,116h1v1h-1zM639,122h1v1h-1zM647,116h1v1h-1zM647,122h1v1h-1zM655,116h1v1h-1zM655,122h1v1h-1zM663,116h1v1h-1zM663,122h1v1h-1zM671,116h1v1h-1zM671,122h1v1h-1zM679,116h1v1h-1zM679,122h1v1h-1zM687,116h1v1h-1zM687,122h1v1h-1zM695,116h1v1h-1zM695,122h1v1h-1zM703,116h1v1h-1zM703,122h1v1h-1zM711,116h1v1h-1zM711,122h1v1h-1zM719,116h1v1h-1zM719,122h1v1h-1zM727,116h1v1h-1zM727,122h1v1h-1zM735,116h1v1h-1zM735,122h1v1h-1zM743,116h1v1h-1zM743,122h1v1h-1zM751,116h1v1h-1zM751,122h1v1h-1zM759,116h1v1h-1zM759,122h1v1h-1zM767,116h1v1h-1zM767,122h1v1h-1zM775,116h1v1h-1zM775,122h1v1h-1zM783,116h1v1h-1zM783,122h1v1h-1zM791,116h1v1h-1zM791,122h1v1h-1zM799,116h1v1h-1zM799,122h1v1h-1zM807,116h1v1h-1zM807,122h1v1h-1zM815,116h1v1h-1zM815,122h1v1h-1zM823,116h1v1h-1zM823,122h1v1h-1zM831,116h1v1h-1zM831,122h1v1h-1zM839,116h1v1h-1zM839,122h1v1h-1zM847,116h1v1h-1zM847,122h1v1h-1zM855,116h1v1h-1zM855,122h1v1h-1zM863,116h1v1h-1zM863,122h1v1h-1zM871,116h1v1h-1zM871,122h1v1h-1zM879,116h1v1h-1zM879,122h1v1h-1zM887,116h1v1h-1zM887,122h1v1h-1zM895,116h1v1h-1zM895,122h1v1h-1zM903,116h1v1h-1zM903,122h1v1h-1zM911,116h1v1h-1zM911,122h1v1h-1zM919,116h1v1h-1zM919,122h1v1h-1zM927,116h1v1h-1zM927,122h1v1h-1zM935,116h1v1h-1zM935,122h1v1h-1zM943,116h1v1h-1zM943,122h1v1h-1z" fill="#0c0c78" fill-opacity="0.55"/><rect x="157" y="135" width="792" height="1" fill="#0c0c78"/><rect x="157" y="136" width="792" height="1" fill="#0c0c78" fill-opacity="0.15"/><path d="M157,134h1v3h-1zM158,133h1v1h-1zM158,137h1v1h-1zM165,134h1v3h-1zM166,133h1v1h-1zM166,137h1v1h-1zM173,134h1v3h-1zM174,133h1v1h-1zM174,137h1v1h-1zM181,134h1v3h-1zM182,133h1v1h-1zM182,137h1v1h-1zM189,134h1v3h-1zM190,133h1v1h-1zM190,137h1v1h-1zM197,134h1v3h-1zM198,133h1v1h-1zM198,137h1v1h-1zM205,134h1v3h-1zM206,133h1v1h-1zM206,137h1v1h-1zM213,134h1v3h-1zM214,133h1v1h-1zM214,137h1v1h-1zM221,134h1v3h-1zM222,133h1v1h-1zM222,137h1v1h-1zM229,134h1v3h-1zM230,133h1v1h-1zM230,137h1v1h-1zM237,134h1v3h-1zM238,133h1v1h-1zM238,137h1v1h-1zM245,134h1v3h-1zM246,133h1v1h-1zM246,137h1v1h-1zM253,134h1v3h-1zM254,133h1v1h-1zM254,137h1v1h-1zM261,134h1v3h-1zM262,133h1v1h-1zM262,137h1v1h-1zM269,134h1v3h-1zM270,133h1v1h-1zM270,137h1v1h-1zM277,134h1v3h-1zM278,133h1v1h-1zM278,137h1v1h-1zM285,134h1v3h-1zM286,133h1v1h-1zM286,137h1v1h-1zM293,134h1v3h-1zM294,133h1v1h-1zM294,137h1v1h-1zM301,134h1v3h-1zM302,133h1v1h-1zM302,137h1v1h-1zM309,134h1v3h-1zM310,133h1v1h-1zM310,137h1v1h-1zM317,134h1v3h-1zM318,133h1v1h-1zM318,137h1v1h-1zM325,134h1v3h-1zM326,133h1v1h-1zM326,137h1v1h-1zM333,134h1v3h-1zM334,133h1v1h-1zM334,137h1v1h-1zM341,134h1v3h-1zM342,133h1v1h-1zM342,137h1v1h-1zM349,134h1v3h-1zM350,133h1v1h-1zM350,137h1v1h-1zM357,134h1v3h-1zM358,133h1v1h-1zM358,137h1v1h-1zM365,134h1v3h-1zM366,133h1v1h-1zM366,137h1v1h-1zM373,134h1v3h-1zM374,133h1v1h-1zM374,137h1v1h-1zM381,134h1v3h-1zM382,133h1v1h-1zM382,137h1v1h-1zM389,134h1v3h-1zM390,133h1v1h-1zM390,137h1v1h-1zM397,134h1v3h-1zM398,133h1v1h-1zM398,137h1v1h-1zM405,134h1v3h-1zM406,133h1v1h-1zM406,137h1v1h-1zM413,134h1v3h-1zM414,133h1v1h-1zM414,137h1v1h-1zM421,134h1v3h-1zM422,133h1v1h-1zM422,137h1v1h-1zM429,134h1v3h-1zM430,133h1v1h-1zM430,137h1v1h-1zM437,134h1v3h-1zM438,133h1v1h-1zM438,137h1v1h-1zM445,134h1v3h-1zM446,133h1v1h-1zM446,137h1v1h-1zM453,134h1v3h-1zM454,133h1v1h-1zM454,137h1v1h-1zM461,134h1v3h-1zM462,133h1v1h-1zM462,137h1v1h-1zM469,134h1v3h-1zM470,133h1v1h-1zM470,137h1v1h-1zM477,134h1v3h-1zM478,133h1v1h-1zM478,137h1v1h-1zM485,134h1v3h-1zM486,133h1v1h-1zM486,137h1v1h-1zM493,134h1v3h-1zM494,133h1v1h-1zM494,137h1v1h-1zM501,134h1v3h-1zM502,133h1v1h-1zM502,137h1v1h-1zM509,134h1v3h-1zM510,133h1v1h-1zM510,137h1v1h-1zM517,134h1v3h-1zM518,133h1v1h-1zM518,137h1v1h-1zM525,134h1v3h-1zM526,133h1v1h-1zM526,137h1v1h-1zM533,134h1v3h-1zM534,133h1v1h-1zM534,137h1v1h-1zM541,134h1v3h-1zM542,133h1v1h-1zM542,137h1v1h-1zM549,134h1v3h-1zM550,133h1v1h-1zM550,137h1v1h-1zM557,134h1v3h-1zM558,133h1v1h-1zM558,137h1v1h-1zM565,134h1v3h-1zM566,133h1v1h-1zM566,137h1v1h-1zM573,134h1v3h-1zM574,133h1v1h-1zM574,137h1v1h-1zM581,134h1v3h-1zM582,133h1v1h-1zM582,137h1v1h-1zM589,134h1v3h-1zM590,133h1v1h-1zM590,137h1v1h-1zM597,134h1v3h-1zM598,133h1v1h-1zM598,137h1v1h-1zM605,134h1v3h-1zM606,133h1v1h-1zM606,137h1v1h-1zM613,134h1v3h-1zM614,133h1v1h-1zM614,137h1v1h-1zM621,134h1v3h-1zM622,133h1v1h-1zM622,137h1v1h-1zM629,134h1v3h-1zM630,133h1v1h-1zM630,137h1v1h-1zM637,134h1v3h-1zM638,133h1v1h-1zM638,137h1v1h-1zM645,134h1v3h-1zM646,133h1v1h-1zM646,137h1v1h-1zM653,134h1v3h-1zM654,133h1v1h-1zM654,137h1v1h-1zM661,134h1v3h-1zM662,133h1v1h-1zM662,137h1v1h-1zM669,134h1v3h-1zM670,133h1v1h-1zM670,137h1v1h-1zM677,134h1v3h-1zM678,133h1v1h-1zM678,137h1v1h-1zM685,134h1v3h-1zM686,133h1v1h-1zM686,137h1v1h-1zM693,134h1v3h-1zM694,133h1v1h-1zM694,137h1v1h-1zM701,134h1v3h-1zM702,133h1v1h-1zM702,137h1v1h-1zM709,134h1v3h-1zM710,133h1v1h-1zM710,137h1v1h-1zM717,134h1v3h-1zM718,133h1v1h-1zM718,137h1v1h-1zM725,134h1v3h-1zM726,133h1v1h-1zM726,137h1v1h-1zM733,134h1v3h-1zM734,133h1v1h-1zM734,137h1v1h-1zM741,134h1v3h-1zM742,133h1v1h-1zM742,137h1v1h-1zM749,134h1v3h-1zM750,133h1v1h-1zM750,137h1v1h-1zM757,134h1v3h-1zM758,133h1v1h-1zM758,137h1v1h-1zM765,134h1v3h-1zM766,133h1v1h-1zM766,137h1v1h-1zM773,134h1v3h-1zM774,133h1v1h-1zM774,137h1v1h-1zM781,134h1v3h-1zM782,133h1v1h-1zM782,137h1v1h-1zM789,134h1v3h-1zM790,133h1v1h-1zM790,137h1v1h-1zM797,134h1v3h-1zM798,133h1v1h-1zM798,137h1v1h-1zM805,134h1v3h-1zM806,133h1v1h-1zM806,137h1v1h-1zM813,134h1v3h-1zM814,133h1v1h-1zM814,137h1v1h-1zM821,134h1v3h-1zM822,133h1v1h-1zM822,137h1v1h-1zM829,134h1v3h-1zM830,133h1v1h-1zM830,137h1v1h-1zM837,134h1v3h-1zM838,133h1v1h-1zM838,137h1v1h-1zM845,134h1v3h-1zM846,133h1v1h-1zM846,137h1v1h-1zM853,134h1v3h-1zM854,133h1v1h-1zM854,137h1v1h-1zM861,134h1v3h-1zM862,133h1v1h-1zM862,137h1v1h-1zM869,134h1v3h-1zM870,133h1v1h-1zM870,137h1v1h-1zM877,134h1v3h-1zM878,133h1v1h-1zM878,137h1v1h-1zM885,134h1v3h-1zM886,133h1v1h-1zM886,137h1v1h-1zM893,134h1v3h-1zM894,133h1v1h-1zM894,137h1v1h-1zM901,134h1v3h-1zM902,133h1v1h-1zM902,137h1v1h-1zM909,134h1v3h-1zM910,133h1v1h-1zM910,137h1v1h-1zM917,134h1v3h-1zM918,133h1v1h-1zM918,137h1v1h-1zM925,134h1v3h-1zM926,133h1v1h-1zM926,137h1v1h-1zM933,134h1v3h-1zM934,133h1v1h-1zM934,137h1v1h-1zM941,134h1v3h-1zM942,133h1v1h-1zM942,137h1v1h-1z" fill="#0c0c78"/><path d="M159,132h1v1h-1zM159,138h1v1h-1zM167,132h1v1h-1zM167,138h1v1h-1zM175,132h1v1h-1zM175,138h1v1h-1zM183,132h1v1h-1zM183,138h1v1h-1zM191,132h1v1h-1zM191,138h1v1h-1zM199,132h1v1h-1zM199,138h1v1h-1zM207,132h1v1h-1zM207,138h1v1h-1zM215,132h1v1h-1zM215,138h1v1h-1zM223,132h1v1h-1zM223,138h1v1h-1zM231,132h1v1h-1zM231,138h1v1h-1zM239,132h1v1h-1zM239,138h1v1h-1zM247,132h1v1h-1zM247,138h1v1h-1zM255,132h1v1h-1zM255,138h1v1h-1zM263,132h1v1h-1zM263,138h1v1h-1zM271,132h1v1h-1zM271,138h1v1h-1zM279,132h1v1h-1zM279,138h1v1h-1zM287,132h1v1h-1zM287,138h1v1h-1zM295,132h1v1h-1zM295,138h1v1h-1zM303,132h1v1h-1zM303,138h1v1h-1zM311,132h1v1h-1zM311,138h1v1h-1zM319,132h1v1h-1zM319,138h1v1h-1zM327,132h1v1h-1zM327,138h1v1h-1zM335,132h1v1h-1zM335,138h1v1h-1zM343,132h1v1h-1zM343,138h1v1h-1zM351,132h1v1h-1zM351,138h1v1h-1zM359,132h1v1h-1zM359,138h1v1h-1zM367,132h1v1h-1zM367,138h1v1h-1zM375,132h1v1h-1zM375,138h1v1h-1zM383,132h1v1h-1zM383,138h1v1h-1zM391,132h1v1h-1zM391,138h1v1h-1zM399,132h1v1h-1zM399,138h1v1h-1zM407,132h1v1h-1zM407,138h1v1h-1zM415,132h1v1h-1zM415,138h1v1h-1zM423,132h1v1h-1zM423,138h1v1h-1zM431,132h1v1h-1zM431,138h1v1h-1zM439,132h1v1h-1zM439,138h1v1h-1zM447,132h1v1h-1zM447,138h1v1h-1zM455,132h1v1h-1zM455,138h1v1h-1zM463,132h1v1h-1zM463,138h1v1h-1zM471,132h1v1h-1zM471,138h1v1h-1zM479,132h1v1h-1zM479,138h1v1h-1zM487,132h1v1h-1zM487,138h1v1h-1zM495,132h1v1h-1zM495,138h1v1h-1zM503,132h1v1h-1zM503,138h1v1h-1zM511,132h1v1h-1zM511,138h1v1h-1zM519,132h1v1h-1zM519,138h1v1h-1zM527,132h1v1h-1zM527,138h1v1h-1zM535,132h1v1h-1zM535,138h1v1h-1zM543,132h1v1h-1zM543,138h1v1h-1zM551,132h1v1h-1zM551,138h1v1h-1zM559,132h1v1h-1zM559,138h1v1h-1zM567,132h1v1h-1zM567,138h1v1h-1zM575,132h1v1h-1zM575,138h1v1h-1zM583,132h1v1h-1zM583,138h1v1h-1zM591,132h1v1h-1zM591,138h1v1h-1zM599,132h1v1h-1zM599,138h1v1h-1zM607,132h1v1h-1zM607,138h1v1h-1zM615,132h1v1h-1zM615,138h1v1h-1zM623,132h1v1h-1zM623,138h1v1h-1zM631,132h1v1h-1zM631,138h1v1h-1zM639,132h1v1h-1zM639,138h1v1h-1zM647,132h1v1h-1zM647,138h1v1h-1zM655,132h1v1h-1zM655,138h1v1h-1zM663,132h1v1h-1zM663,138h1v1h-1zM671,132h1v1h-1zM671,138h1v1h-1zM679,132h1v1h-1zM679,138h1v1h-1zM687,132h1v1h-1zM687,138h1v1h-1zM695,132h1v1h-1zM695,138h1v1h-1zM703,132h1v1h-1zM703,138h1v1h-1zM711,132h1v1h-1zM711,138h1v1h-1zM719,132h1v1h-1zM719,138h1v1h-1zM727,132h1v1h-1zM727,138h1v1h-1zM735,132h1v1h-1zM735,138h1v1h-1zM743,132h1v1h-1zM743,138h1v1h-1zM751,132h1v1h-1zM751,138h1v1h-1zM759,132h1v1h-1zM759,138h1v1h-1zM767,132h1v1h-1zM767,138h1v1h-1zM775,132h1v1h-1zM775,138h1v1h-1zM783,132h1v1h-1zM783,138h1v1h-1zM791,132h1v1h-1zM791,138h1v1h-1zM799,132h1v1h-1zM799,138h1v1h-1zM807,132h1v1h-1zM807,138h1v1h-1zM815,132h1v1h-1zM815,138h1v1h-1zM823,132h1v1h-1zM823,138h1v1h-1zM831,132h1v1h-1zM831,138h1v1h-1zM839,132h1v1h-1zM839,138h1v1h-1zM847,132h1v1h-1zM847,138h1v1h-1zM855,132h1v1h-1zM855,138h1v1h-1zM863,132h1v1h-1zM863,138h1v1h-1zM871,132h1v1h-1zM871,138h1v1h-1zM879,132h1v1h-1zM879,138h1v1h-1zM887,132h1v1h-1zM887,138h1v1h-1zM895,132h1v1h-1zM895,138h1v1h-1zM903,132h1v1h-1zM903,138h1v1h-1zM911,132h1v1h-1zM911,138h1v1h-1zM919,132h1v1h-1zM919,138h1v1h-1zM927,132h1v1h-1zM927,138h1v1h-1zM935,132h1v1h-1zM935,138h1v1h-1zM943,132h1v1h-1zM943,138h1v1h-1z" fill="#0c0c78" fill-opacity="0.55"/><rect x="157" y="151" width="792" height="1" fill="#0c0c78"/><rect x="157" y="152" width="792" height="1" fill="#0c0c78" fill-opacity="0.15"/><path d="M157,150h1v3h-1zM158,149h1v1h-1zM158,153h1v1h-1zM165,150h1v3h-1zM166,149h1v1h-1zM166,153h1v1h-1zM173,150h1v3h-1zM174,149h1v1h-1zM174,153h1v1h-1zM181,150h1v3h-1zM182,149h1v1h-1zM182,153h1v1h-1zM189,150h1v3h-1zM190,149h1v1h-1zM190,153h1v1h-1zM197,150h1v3h-1zM198,149h1v1h-1zM198,153h1v1h-1zM205,150h1v3h-1zM206,149h1v1h-1zM206,153h1v1h-1zM213,150h1v3h-1zM214,149h1v1h-1zM214,153h1v1h-1zM221,150h1v3h-1zM222,149h1v1h-1zM222,153h1v1h-1zM229,150h1v3h-1zM230,149h1v1h-1zM230,153h1v1h-1zM237,150h1v3h-1zM238,149h1v1h-1zM238,153h1v1h-1zM245,150h1v3h-1zM246,149h1v1h-1zM246,153h1v1h-1zM253,150h1v3h-1zM254,149h1v1h-1zM254,153h1v1h-1zM261,150h1v3h-1zM262,149h1v1h-1zM262,153h1v1h-1zM269,150h1v3h-1zM270,149h1v1h-1zM270,153h1v1h-1zM277,150h1v3h-1zM278,149h1v1h-1zM278,153h1v1h-1zM285,150h1v3h-1zM286,149h1v1h-1zM286,153h1v1h-1zM293,150h1v3h-1zM294,149h1v1h-1zM294,153h1v1h-1zM301,150h1v3h-1zM302,149h1v1h-1zM302,153h1v1h-1zM309,150h1v3h-1zM310,149h1v1h-1zM310,153h1v1h-1zM317,150h1v3h-1zM318,149h1v1h-1zM318,153h1v1h-1zM325,150h1v3h-1zM326,149h1v1h-1zM326,153h1v1h-1zM333,150h1v3h-1zM334,149h1v1h-1zM334,153h1v1h-1zM341,150h1v3h-1zM342,149h1v1h-1zM342,153h1v1h-1zM349,150h1v3h-1zM350,149h1v1h-1zM350,153h1v1h-1zM357,150h1v3h-1zM358,149h1v1h-1zM358,153h1v1h-1zM365,150h1v3h-1zM366,149h1v1h-1zM366,153h1v1h-1zM373,150h1v3h-1zM374,149h1v1h-1zM374,153h1v1h-1zM381,150h1v3h-1zM382,149h1v1h-1zM382,153h1v1h-1zM389,150h1v3h-1zM390,149h1v1h-1zM390,153h1v1h-1zM397,150h1v3h-1zM398,149h1v1h-1zM398,153h1v1h-1zM405,150h1v3h-1zM406,149h1v1h-1zM406,153h1v1h-1zM413,150h1v3h-1zM414,149h1v1h-1zM414,153h1v1h-1zM421,150h1v3h-1zM422,149h1v1h-1zM422,153h1v1h-1zM429,150h1v3h-1zM430,149h1v1h-1zM430,153h1v1h-1zM437,150h1v3h-1zM438,149h1v1h-1zM438,153h1v1h-1zM445,150h1v3h-1zM446,149h1v1h-1zM446,153h1v1h-1zM453,150h1v3h-1zM454,149h1v1h-1zM454,153h1v1h-1zM461,150h1v3h-1zM462,149h1v1h-1zM462,153h1v1h-1zM469,150h1v3h-1zM470,149h1v1h-1zM470,153h1v1h-1zM477,150h1v3h-1zM478,149h1v1h-1zM478,153h1v1h-1zM485,150h1v3h-1zM486,149h1v1h-1zM486,153h1v1h-1zM493,150h1v3h-1zM494,149h1v1h-1zM494,153h1v1h-1zM501,150h1v3h-1zM502,149h1v1h-1zM502,153h1v1h-1zM509,150h1v3h-1zM510,149h1v1h-1zM510,153h1v1h-1zM517,150h1v3h-1zM518,149h1v1h-1zM518,153h1v1h-1zM525,150h1v3h-1zM526,149h1v1h-1zM526,153h1v1h-1zM533,150h1v3h-1zM534,149h1v1h-1zM534,153h1v1h-1zM541,150h1v3h-1zM542,149h1v1h-1zM542,153h1v1h-1zM549,150h1v3h-1zM550,149h1v1h-1zM550,153h1v1h-1zM557,150h1v3h-1zM558,149h1v1h-1zM558,153h1v1h-1zM565,150h1v3h-1zM566,149h1v1h-1zM566,153h1v1h-1zM573,150h1v3h-1zM574,149h1v1h-1zM574,153h1v1h-1zM581,150h1v3h-1zM582,149h1v1h-1zM582,153h1v1h-1zM589,150h1v3h-1zM590,149h1v1h-1zM590,153h1v1h-1zM597,150h1v3h-1zM598,149h1v1h-1zM598,153h1v1h-1zM605,150h1v3h-1zM606,149h1v1h-1zM606,153h1v1h-1zM613,150h1v3h-1zM614,149h1v1h-1zM614,153h1v1h-1zM621,150h1v3h-1zM622,149h1v1h-1zM622,153h1v1h-1zM629,150h1v3h-1zM630,149h1v1h-1zM630,153h1v1h-1zM637,150h1v3h-1zM638,149h1v1h-1zM638,153h1v1h-1zM645,150h1v3h-1zM646,149h1v1h-1zM646,153h1v1h-1zM653,150h1v3h-1zM654,149h1v1h-1zM654,153h1v1h-1zM661,150h1v3h-1zM662,149h1v1h-1zM662,153h1v1h-1zM669,150h1v3h-1zM670,149h1v1h-1zM670,153h1v1h-1zM677,150h1v3h-1zM678,149h1v1h-1zM678,153h1v1h-1zM685,150h1v3h-1zM686,149h1v1h-1zM686,153h1v1h-1zM693,150h1v3h-1zM694,149h1v1h-1zM694,153h1v1h-1zM701,150h1v3h-1zM702,149h1v1h-1zM702,153h1v1h-1zM709,150h1v3h-1zM710,149h1v1h-1zM710,153h1v1h-1zM717,150h1v3h-1zM718,149h1v1h-1zM718,153h1v1h-1zM725,150h1v3h-1zM726,149h1v1h-1zM726,153h1v1h-1zM733,150h1v3h-1zM734,149h1v1h-1zM734,153h1v1h-1zM741,150h1v3h-1zM742,149h1v1h-1zM742,153h1v1h-1zM749,150h1v3h-1zM750,149h1v1h-1zM750,153h1v1h-1zM757,150h1v3h-1zM758,149h1v1h-1zM758,153h1v1h-1zM765,150h1v3h-1zM766,149h1v1h-1zM766,153h1v1h-1zM773,150h1v3h-1zM774,149h1v1h-1zM774,153h1v1h-1zM781,150h1v3h-1zM782,149h1v1h-1zM782,153h1v1h-1zM789,150h1v3h-1zM790,149h1v1h-1zM790,153h1v1h-1zM797,150h1v3h-1zM798,149h1v1h-1zM798,153h1v1h-1zM805,150h1v3h-1zM806,149h1v1h-1zM806,153h1v1h-1zM813,150h1v3h-1zM814,149h1v1h-1zM814,153h1v1h-1zM821,150h1v3h-1zM822,149h1v1h-1zM822,153h1v1h-1zM829,150h1v3h-1zM830,149h1v1h-1zM830,153h1v1h-1zM837,150h1v3h-1zM838,149h1v1h-1zM838,153h1v1h-1zM845,150h1v3h-1zM846,149h1v1h-1zM846,153h1v1h-1zM853,150h1v3h-1zM854,149h1v1h-1zM854,153h1v1h-1zM861,150h1v3h-1zM862,149h1v1h-1zM862,153h1v1h-1zM869,150h1v3h-1zM870,149h1v1h-1zM870,153h1v1h-1zM877,150h1v3h-1zM878,149h1v1h-1zM878,153h1v1h-1zM885,150h1v3h-1zM886,149h1v1h-1zM886,153h1v1h-1zM893,150h1v3h-1zM894,149h1v1h-1zM894,153h1v1h-1zM901,150h1v3h-1zM902,149h1v1h-1zM902,153h1v1h-1zM909,150h1v3h-1zM910,149h1v1h-1zM910,153h1v1h-1zM917,150h1v3h-1zM918,149h1v1h-1zM918,153h1v1h-1zM925,150h1v3h-1zM926,149h1v1h-1zM926,153h1v1h-1zM933,150h1v3h-1zM934,149h1v1h-1zM934,153h1v1h-1zM941,150h1v3h-1zM942,149h1v1h-1zM942,153h1v1h-1z" fill="#0c0c78"/><path d="M159,148h1v1h-1zM159,154h1v1h-1zM167,148h1v1h-1zM167,154h1v1h-1zM175,148h1v1h-1zM175,154h1v1h-1zM183,148h1v1h-1zM183,154h1v1h-1zM191,148h1v1h-1zM191,154h1v1h-1zM199,148h1v1h-1zM199,154h1v1h-1zM207,148h1v1h-1zM207,154h1v1h-1zM215,148h1v1h-1zM215,154h1v1h-1zM223,148h1v1h-1zM223,154h1v1h-1zM231,148h1v1h-1zM231,154h1v1h-1zM239,148h1v1h-1zM239,154h1v1h-1zM247,148h1v1h-1zM247,154h1v1h-1zM255,148h1v1h-1zM255,154h1v1h-1zM263,148h1v1h-1zM263,154h1v1h-1zM271,148h1v1h-1zM271,154h1v1h-1zM279,148h1v1h-1zM279,154h1v1h-1zM287,148h1v1h-1zM287,154h1v1h-1zM295,148h1v1h-1zM295,154h1v1h-1zM303,148h1v1h-1zM303,154h1v1h-1zM311,148h1v1h-1zM311,154h1v1h-1zM319,148h1v1h-1zM319,154h1v1h-1zM327,148h1v1h-1zM327,154h1v1h-1zM335,148h1v1h-1zM335,154h1v1h-1zM343,148h1v1h-1zM343,154h1v1h-1zM351,148h1v1h-1zM351,154h1v1h-1zM359,148h1v1h-1zM359,154h1v1h-1zM367,148h1v1h-1zM367,154h1v1h-1zM375,148h1v1h-1zM375,154h1v1h-1zM383,148h1v1h-1zM383,154h1v1h-1zM391,148h1v1h-1zM391,154h1v1h-1zM399,148h1v1h-1zM399,154h1v1h-1zM407,148h1v1h-1zM407,154h1v1h-1zM415,148h1v1h-1zM415,154h1v1h-1zM423,148h1v1h-1zM423,154h1v1h-1zM431,148h1v1h-1zM431,154h1v1h-1zM439,148h1v1h-1zM439,154h1v1h-1zM447,148h1v1h-1zM447,154h1v1h-1zM455,148h1v1h-1zM455,154h1v1h-1zM463,148h1v1h-1zM463,154h1v1h-1zM471,148h1v1h-1zM471,154h1v1h-1zM479,148h1v1h-1zM479,154h1v1h-1zM487,148h1v1h-1zM487,154h1v1h-1zM495,148h1v1h-1zM495,154h1v1h-1zM503,148h1v1h-1zM503,154h1v1h-1zM511,148h1v1h-1zM511,154h1v1h-1zM519,148h1v1h-1zM519,154h1v1h-1zM527,148h1v1h-1zM527,154h1v1h-1zM535,148h1v1h-1zM535,154h1v1h-1zM543,148h1v1h-1zM543,154h1v1h-1zM551,148h1v1h-1zM551,154h1v1h-1zM559,148h1v1h-1zM559,154h1v1h-1zM567,148h1v1h-1zM567,154h1v1h-1zM575,148h1v1h-1zM575,154h1v1h-1zM583,148h1v1h-1zM583,154h1v1h-1zM591,148h1v1h-1zM591,154h1v1h-1zM599,148h1v1h-1zM599,154h1v1h-1zM607,148h1v1h-1zM607,154h1v1h-1zM615,148h1v1h-1zM615,154h1v1h-1zM623,148h1v1h-1zM623,154h1v1h-1zM631,148h1v1h-1zM631,154h1v1h-1zM639,148h1v1h-1zM639,154h1v1h-1zM647,148h1v1h-1zM647,154h1v1h-1zM655,148h1v1h-1zM655,154h1v1h-1zM663,148h1v1h-1zM663,154h1v1h-1zM671,148h1v1h-1zM671,154h1v1h-1zM679,148h1v1h-1zM679,154h1v1h-1zM687,148h1v1h-1zM687,154h1v1h-1zM695,148h1v1h-1zM695,154h1v1h-1zM703,148h1v1h-1zM703,154h1v1h-1zM711,148h1v1h-1zM711,154h1v1h-1zM719,148h1v1h-1zM719,154h1v1h-1zM727,148h1v1h-1zM727,154h1v1h-1zM735,148h1v1h-1zM735,154h1v1h-1zM743,148h1v1h-1zM743,154h1v1h-1zM751,148h1v1h-1zM751,154h1v1h-1zM759,148h1v1h-1zM759,154h1v1h-1zM767,148h1v1h-1zM767,154h1v1h-1zM775,148h1v1h-1zM775,154h1v1h-1zM783,148h1v1h-1zM783,154h1v1h-1zM791,148h1v1h-1zM791,154h1v1h-1zM799,148h1v1h-1zM799,154h1v1h-1zM807,148h1v1h-1zM807,154h1v1h-1zM815,148h1v1h-1zM815,154h1v1h-1zM823,148h1v1h-1zM823,154h1v1h-1zM831,148h1v1h-1zM831,154h1v1h-1zM839,148h1v1h-1zM839,154h1v1h-1zM847,148h1v1h-1zM847,154h1v1h-1zM855,148h1v1h-1zM855,154h1v1h-1zM863,148h1v1h-1zM863,154h1v1h-1zM871,148h1v1h-1zM871,154h1v1h-1zM879,148h1v1h-1zM879,154h1v1h-1zM887,148h1v1h-1zM887,154h1v1h-1zM895,148h1v1h-1zM895,154h1v1h-1zM903,148h1v1h-1zM903,154h1v1h-1zM911,148h1v1h-1zM911,154h1v1h-1zM919,148h1v1h-1zM919,154h1v1h-1zM927,148h1v1h-1zM927,154h1v1h-1zM935,148h1v1h-1zM935,154h1v1h-1zM943,148h1v1h-1zM943,154h1v1h-1z" fill="#0c0c78" fill-opacity="0.55"/><rect x="157" y="182" width="792" height="1" fill="#0c0c78"/><rect x="156" y="253" width="793" height="15" fill="#bbbbbb"/><rect x="156" y="316" width="378" height="64" fill="#fff"/><rect x="156" y="316" width="378" height="1" fill="#eeeeee"/><rect x="156" y="316" width="1" height="64" fill="#f4f4f4"/><rect x="156" y="331" width="5" height="48" fill="#FFA54F"/><rect x="163" y="330" width="5" height="49" fill="#EE9A00"/><rect x="170" y="325" width="5" height="54" fill="#8FBC8F"/><rect x="177" y="333" width="5" height="46" fill="#8B1C62"/><rect x="184" y="333" width="5" height="46" fill="#EE6A50"/><rect x="191" y="336" width="5" height="43" fill="#FF0000"/><rect x="198" y="334" width="5" height="45" fill="#CDB79E"/><rect x="205" y="342" width="5" height="37" fill="#EEEE00"/><rect x="212" y="338" width="5" height="41" fill="#EEEE00"/><rect x="219" y="341" width="5" height="38" fill="#EEEE00"/><rect x="226" y="335" width="5" height="44" fill="#EEEE00"/><rect x="233" y="335" width="5" height="44" fill="#EEEE00"/><rect x="240" y="336" width="5" height="43" fill="#EEEE00"/><rect x="247" y="335" width="5" height="44" fill="#EEEE00"/><rect x="254" y="341" width="5" height="38" fill="#EEEE00"/><rect x="261" y="340" width="5" height="39" fill="#EEEE00"/><rect x="268" y="339" width="5" height="40" fill="#EEEE00"/><rect x="275" y="341" width="5" height="38" fill="#EEEE00"/><rect x="282" y="341" width="5" height="38" fill="#EEEE00"/><rect x="289" y="342" width="5" height="37" fill="#EEEE00"/><rect x="296" y="331" width="5" height="48" fill="#00CDCD"/><rect x="303" y="333" width="5" height="46" fill="#EE82EE"/><rect x="310" y="335" width="5" height="44" fill="#9AC0CD"/><rect x="317" y="334" width="5" height="45" fill="#EED5D2"/><rect x="324" y="334" width="5" height="45" fill="#EED5D2"/><rect x="331" y="335" width="5" height="44" fill="#CDB79E"/><rect x="338" y="337" width="5" height="42" fill="#EEC591"/><rect x="345" y="333" width="5" height="46" fill="#8B7355"/><rect x="352" y="340" width="5" height="39" fill="#8B7355"/><rect x="359" y="334" width="5" height="45" fill="#CDAA7D"/><rect x="366" y="334" width="5" height="45" fill="#EED5D2"/><rect x="373" y="342" width="5" height="37" fill="#B452CD"/><rect x="380" y="345" width="5" height="34" fill="#7A378B"/><rect x="387" y="345" width="5" height="34" fill="#CDB79E"/><rect x="394" y="341" width="5" height="38" fill="#CDB79E"/><rect x="401" y="356" width="5" height="23" fill="#CDB79E"/><rect x="408" y="323" width="5" height="56" fill="#9ACD32"/><rect x="415" y="336" width="5" height="43" fill="#CDB79E"/><rect x="422" y="356" width="5" height="23" fill="#7B68EE"/><rect x="429" y="326" width="5" height="53" fill="#FFD700"/><rect x="436" y="336" width="5" height="43" fill="#FFB6C1"/><rect x="443" y="352" width="5" height="27" fill="#CD9B1D"/><rect x="450" y="339" width="5" height="40" fill="#B4EEB4"/><rect x="457" y="333" width="5" height="46" fill="#D9D9D9"/><rect x="464" y="337" width="5" height="42" fill="#3A5FCD"/><rect x="471" y="334" width="5" height="45" fill="#1E90FF"/><rect x="478" y="332" width="5" height="47" fill="#CDB79E"/><rect x="485" y="319" width="5" height="60" fill="#CDB79E"/><rect x="492" y="334" width="5" height="45" fill="#FFDAB9"/><rect x="499" y="349" width="5" height="30" fill="#A6A6A6"/><rect x="506" y="330" width="5" height="49" fill="#008B45"/><rect x="513" y="333" width="5" height="46" fill="#EED5D2"/><rect x="520" y="334" width="5" height="45" fill="#EED5D2"/><rect x="527" y="316" width="5" height="63" fill="#FF00FF"/><rect x="156" y="379" width="378" height="1" fill="#ebebe6"/><rect x="156" y="380" width="793" height="2" fill="#000080"/><rect x="156" y="412" width="793" height="6" fill="#d47ef8"/><rect x="156" y="418" width="793" height="5" fill="#6468fa"/><rect x="156" y="423" width="793" height="2" fill="#2c64c8"/><rect x="156" y="425" width="793" height="1" fill="#322a6a"/><rect x="156" y="426" width="793" height="2" fill="#1a1060"/><rect x="156" y="428" width="793" height="1" fill="#0a0030"/><rect x="160" y="469" width="40" height="1" fill="#a0a000" fill-opacity="0.3"/><rect x="160" y="469" width="10" height="1" fill="#a0a000" fill-opacity="0.55"/><rect x="192" y="469" width="8" height="1" fill="#a0a000" fill-opacity="0.45"/><rect x="212" y="469" width="40" height="1" fill="#ff0000" fill-opacity="0.45"/><rect x="222" y="469" width="10" height="1" fill="#ff0000" fill-opacity="0.2"/><rect x="234" y="469" width="10" height="1" fill="#ff0000" fill-opacity="0.2"/><rect x="370" y="465" width="38" height="1" fill="#00ff00" fill-opacity="0.5"/><rect x="386" y="465" width="6" height="5" fill="#00f000"/><rect x="423" y="468" width="38" height="1" fill="#00ff00" fill-opacity="0.22"/><rect x="439" y="468" width="6" height="2" fill="#00e800"/><path d="M517,466.30L511,466.30L509,465.5L486,465.5L478,467.20L486,468.9L509,468.9L511,468.40L518,468.40" stroke="#a0a000" stroke-opacity="0.8" stroke-width="0.9" fill="none"/><path d="M478,467.20L484,465.80L484,468.60Z" fill="#a0a000" fill-opacity="0.9"/><path d="M781,465.60L775,465.60L773,464.8L750,464.8L742,467.00L750,469.2L773,469.2L775,468.70L782,468.70" stroke="#a0a000" stroke-opacity="0.8" stroke-width="0.9" fill="none"/><path d="M742,467.00L748,465.10L748,468.90Z" fill="#a0a000" fill-opacity="0.9"/><path d="M635,473.4 Q645,472.3 651,471.5 Q656,471.1 661,471.6 Q668,472.6 675,473.4" stroke="#ff0000" stroke-width="1.2" fill="none"/><rect x="847" y="475" width="40" height="1" fill="#ff0000" fill-opacity="0.5"/><rect x="854" y="471" width="34" height="1" fill="#0000ff" fill-opacity="0.6"/><rect x="854" y="474" width="17" height="1" fill="#0000ff" fill-opacity="0.6"/><rect x="871" y="473" width="14" height="2" fill="#0000ff" fill-opacity="0.5"/><rect x="848" y="472" width="6" height="2" fill="#0000ff"/><rect x="885" y="473" width="6" height="2" fill="#0000ff"/><rect x="177.00" y="563" width="6.6" height="1" fill="#7a7aaa"/><rect x="177.00" y="566" width="6.6" height="1" fill="#7a7aaa"/><rect x="228.60" y="563" width="6.6" height="1" fill="#7a7aaa"/><rect x="228.60" y="566" width="6.6" height="1" fill="#7a7aaa"/><rect x="281.90" y="563" width="6.6" height="1" fill="#7a7aaa"/><rect x="281.90" y="566" width="6.6" height="1" fill="#7a7aaa"/><rect x="335.40" y="563" width="6.6" height="1" fill="#7a7aaa"/><rect x="335.40" y="566" width="6.6" height="1" fill="#7a7aaa"/><rect x="388.40" y="563" width="6.6" height="1" fill="#7a7aaa"/><rect x="388.40" y="566" width="6.6" height="1" fill="#7a7aaa"/><rect x="441.50" y="563" width="6.6" height="1" fill="#7a7aaa"/><rect x="441.50" y="566" width="6.6" height="1" fill="#7a7aaa"/><rect x="494.10" y="563" width="6.6" height="1" fill="#7a7aaa"/><rect x="494.10" y="566" width="6.6" height="1" fill="#7a7aaa"/><rect x="547.00" y="563" width="6.6" height="1" fill="#7a7aaa"/><rect x="547.00" y="566" width="6.6" height="1" fill="#7a7aaa"/><rect x="599.40" y="563" width="6.6" height="1" fill="#7a7aaa"/><rect x="599.40" y="566" width="6.6" height="1" fill="#7a7aaa"/><rect x="651.50" y="563" width="6.6" height="1" fill="#7a7aaa"/><rect x="651.50" y="566" width="6.6" height="1" fill="#7a7aaa"/><rect x="705.50" y="563" width="6.6" height="1" fill="#7a7aaa"/><rect x="705.50" y="566" width="6.6" height="1" fill="#7a7aaa"/><rect x="757.30" y="563" width="6.6" height="1" fill="#7a7aaa"/><rect x="757.30" y="566" width="6.6" height="1" fill="#7a7aaa"/><rect x="811.20" y="563" width="6.6" height="1" fill="#7a7aaa"/><rect x="811.20" y="566" width="6.6" height="1" fill="#7a7aaa"/><rect x="864.10" y="563" width="6.6" height="1" fill="#7a7aaa"/><rect x="864.10" y="566" width="6.6" height="1" fill="#7a7aaa"/><rect x="917.00" y="563" width="6.6" height="1" fill="#7a7aaa"/><rect x="917.00" y="566" width="6.6" height="1" fill="#7a7aaa"/><path d="M630.4,514.2h1.6v8.8h-1.6zM628,517.6l2.4-3.4l0.6,1.2l-2.2,2.8z" fill="#eb9a30"/><rect x="631" y="570" width="1" height="13" fill="#e08a1e"/><rect x="631" y="585" width="1" height="14" fill="#e08a1e"/><rect x="156" y="661" width="793" height="15" fill="#000"/>
<text x="56.40" y="13" fill="#000" color="#000" font-size="13" textLength="95.21" lengthAdjust="spacing" transform="matrix(1 0 0 1.06 0 -0.780)">Window Position</text><text x="118.60" y="29" fill="#000" color="#000" font-size="13" textLength="33.43" lengthAdjust="spacing" transform="matrix(1 0 0 1.06 0 -1.740)">Scale</text><text x="122.90" y="47" fill="#000" color="#000" font-size="13" textLength="29.21" lengthAdjust="spacing" transform="matrix(1 0 0 1.06 0 -2.820)">chr6:</text><text x="132.20" y="63" fill="#000" color="#000" font-size="13" textLength="19.39" lengthAdjust="spacing" transform="matrix(1 0 0 1.06 0 -3.780)">---&gt;</text><text x="345.90" y="12" fill="#000" color="#000" font-size="13" textLength="196.05" lengthAdjust="spacing" transform="matrix(1 0 0 1.06 0 -0.720)">Human Feb. 2009 (GRCh37/hg19)</text><text x="553.90" y="12" fill="#000" color="#000" font-size="13" textLength="204.57" lengthAdjust="spacing" transform="matrix(1 0 0 1.06 0 -0.720)">chr6:42,013,108-42,013,122 (15 bp)</text><text x="371.30" y="29" fill="#000" color="#000" font-size="13" textLength="45.25" lengthAdjust="spacing" transform="matrix(1 0 0 1.06 0 -1.740)">5 bases</text><text x="694.10" y="29" fill="#000" color="#000" font-size="13" textLength="27.82" lengthAdjust="spacing" transform="matrix(1 0 0 1.06 0 -1.740)">hg19</text><text x="248.30" y="47" fill="#000" color="#000" font-size="13" textLength="63.71" lengthAdjust="spacing" transform="matrix(1 0 0 1.06 0 -2.820)">42,013,110</text><text x="511.90" y="47" fill="#000" color="#000" font-size="13" textLength="63.71" lengthAdjust="spacing" transform="matrix(1 0 0 1.06 0 -2.820)">42,013,115</text><text x="776.90" y="47" fill="#000" color="#000" font-size="13" textLength="63.68" lengthAdjust="spacing" transform="matrix(1 0 0 1.06 0 -2.820)">42,013,120</text><text x="429.40" y="78" fill="#000" color="#000" font-size="13" textLength="246.56" lengthAdjust="spacing" transform="matrix(1 0 0 1.06 0 -4.680)">GENCODE V49lift37 (10 items filtered out)</text><text x="109.60" y="92" fill="#0c0c78" color="#0c0c78" font-size="13" textLength="42.00" lengthAdjust="spacing" transform="matrix(1 0 0 1.1 0 -9.200)">CCND3</text><text x="109.60" y="108" fill="#0c0c78" color="#0c0c78" font-size="13" textLength="42.00" lengthAdjust="spacing" transform="matrix(1 0 0 1.1 0 -10.800)">CCND3</text><text x="109.60" y="124" fill="#0c0c78" color="#0c0c78" font-size="13" textLength="42.00" lengthAdjust="spacing" transform="matrix(1 0 0 1.1 0 -12.400)">CCND3</text><text x="109.60" y="140" fill="#0c0c78" color="#0c0c78" font-size="13" textLength="42.00" lengthAdjust="spacing" transform="matrix(1 0 0 1.1 0 -14.000)">CCND3</text><text x="109.60" y="156" fill="#0c0c78" color="#0c0c78" font-size="13" textLength="42.00" lengthAdjust="spacing" transform="matrix(1 0 0 1.1 0 -15.600)">CCND3</text><text x="490.70" y="172" fill="#000" color="#000" font-size="11" textLength="123.43" lengthAdjust="spacing" transform="matrix(1 0 0 1.06 0 -10.320)">RefSeq genes from NCBI</text><text x="59.60" y="187" fill="#0c0c78" color="#0c0c78" font-size="13" textLength="92.63" lengthAdjust="spacing" transform="matrix(1 0 0 1.06 0 -11.220)">RefSeq Curated</text><text x="444.90" y="203" fill="#000" color="#000" font-size="11" textLength="213.67" lengthAdjust="spacing" transform="matrix(1 0 0 1.06 0 -12.180)">Publications: Sequences in Scientific Articles</text><text x="86.20" y="218" fill="#000" color="#000" font-size="13" textLength="65.06" lengthAdjust="spacing" transform="matrix(1 0 0 1.06 0 -13.080)">Sequences</text><text x="117.30" y="234" fill="#000" color="#000" font-size="13" textLength="34.13" lengthAdjust="spacing" transform="matrix(1 0 0 1.06 0 -14.040)">SNPs</text><text x="368.20" y="251" fill="#006400" color="#006400" font-size="13" textLength="368.92" lengthAdjust="spacing" transform="matrix(1 0 0 1.06 0 -15.060)">OMIM Gene Phenotypes - Dark Green Can Be Disease-causing</text><text x="74.20" y="265" fill="#006400" color="#006400" font-size="13" textLength="77.00" lengthAdjust="spacing" transform="matrix(1 0 0 1.06 0 -15.900)">OMIM Genes</text><text x="436.30" y="281" fill="#000" color="#000" font-size="11" textLength="231.67" lengthAdjust="spacing" transform="matrix(1 0 0 1.06 0 -16.860)">Short Genetic Variants from dbSNP release 155</text><text x="26.90" y="296" fill="#000" color="#000" font-size="13" textLength="125.69" lengthAdjust="spacing" transform="matrix(1 0 0 1.06 0 -17.760)">Common dbSNP(155)</text><text x="266.60" y="312" fill="#000" color="#000" font-size="13" textLength="571.05" lengthAdjust="spacing" transform="matrix(1 0 0 1.06 0 -18.720)">Gene Expression in 54 tissues from GTEx RNA-seq of 17382 samples, 948 donors (V8, Aug 2019)</text><text x="109.50" y="355" fill="#000" color="#000" font-size="13" textLength="41.90" lengthAdjust="spacing" transform="matrix(1 0 0 1.1 0 -35.500)">CCND3</text><text x="280.70" y="397" fill="#000" color="#000" font-size="13" textLength="541.85" lengthAdjust="spacing" transform="matrix(1 0 0 1.06 0 -23.820)">H3K27Ac Mark (Often Found Near Active Regulatory Elements) on 7 cell lines from ENCODE</text><text x="12.50" y="411" fill="#000" color="#000" font-size="13" textLength="105.02" lengthAdjust="spacing" transform="matrix(1 0 0 1.06 0 -24.660)">Layered H3K27Ac</text><text x="405.30" y="443" fill="#3c3c8c" color="#3c3c8c" font-size="13" textLength="292.64" lengthAdjust="spacing" transform="matrix(1 0 0 1.06 0 -26.580)">100 vertebrates Basewise Conservation by PhyloP</text><text x="116.20" y="442" fill="#3c3c8c" color="#3c3c8c" font-size="13" textLength="35.36" lengthAdjust="spacing" transform="matrix(1 0 0 1.06 0 -26.520)">4.88 _</text><text x="12.80" y="467" fill="#3c3c8c" color="#3c3c8c" font-size="13" textLength="86.20" lengthAdjust="spacing" transform="matrix(1 0 0 1.06 0 -28.020)">100 Vert. Cons</text><text x="119.60" y="492" fill="#8c3c3c" color="#8c3c3c" font-size="13" textLength="32.05" lengthAdjust="spacing" transform="matrix(1 0 0 1.06 0 -29.520)">-4.5 _</text><text x="444.90" y="509" fill="#0c0c78" color="#0c0c78" font-size="13" textLength="214.22" lengthAdjust="spacing" transform="matrix(1 0 0 1.06 0 -30.540)">Multiz Alignments of 100 Vertebrates</text><text x="121.40" y="523" fill="#e08a1e" color="#e08a1e" font-size="13" textLength="30.08" lengthAdjust="spacing" transform="matrix(1 0 0 1.06 0 -31.380)">Gaps</text><text x="110.60" y="538" fill="#0c0c78" color="#0c0c78" font-size="13" textLength="40.72" lengthAdjust="spacing" transform="matrix(1 0 0 1.06 0 -32.280)">Human</text><text x="107.60" y="553" fill="#0c0c78" color="#0c0c78" font-size="13" textLength="43.88" lengthAdjust="spacing" transform="matrix(1 0 0 1.06 0 -33.180)">Rhesus</text><text x="112.60" y="568" fill="#006400" color="#006400" font-size="13" textLength="38.83" lengthAdjust="spacing" transform="matrix(1 0 0 1.06 0 -34.080)">Mouse</text><text x="129.00" y="583" fill="#0c0c78" color="#0c0c78" font-size="13" textLength="23.26" lengthAdjust="spacing" transform="matrix(1 0 0 1.06 0 -34.980)">Dog</text><text x="100.80" y="598" fill="#006400" color="#006400" font-size="13" textLength="49.93" lengthAdjust="spacing" transform="matrix(1 0 0 1.06 0 -35.880)">Elephant</text><text x="105.00" y="613" fill="#006400" color="#006400" font-size="13" textLength="46.37" lengthAdjust="spacing" transform="matrix(1 0 0 1.06 0 -36.780)">Chicken</text><text x="84.60" y="628" fill="#0c0c78" color="#0c0c78" font-size="13" textLength="67.00" lengthAdjust="spacing" transform="matrix(1 0 0 1.06 0 -37.680)">X_tropicalis</text><text x="98.10" y="643" fill="#006400" color="#006400" font-size="13" textLength="53.50" lengthAdjust="spacing" transform="matrix(1 0 0 1.06 0 -38.580)">Zebrafish</text><text x="440.90" y="659" fill="#000" color="#000" font-size="13" textLength="222.56" lengthAdjust="spacing" transform="matrix(1 0 0 1.06 0 -39.540)">Repeating Elements by RepeatMasker</text><text x="67.50" y="673" fill="#000" color="#000" font-size="13" textLength="83.95" lengthAdjust="spacing" transform="matrix(1 0 0 1.06 0 -40.380)">RepeatMasker</text><text x="180.9" y="61" text-anchor="middle" fill="#000" color="#000" font-size="13" transform="matrix(1 0 0 1.1 0 -6.100)">C</text><text x="232.5" y="61" text-anchor="middle" fill="#000" color="#000" font-size="13" transform="matrix(1 0 0 1.1 0 -6.100)">A</text><text x="285.8" y="61" text-anchor="middle" fill="#000" color="#000" font-size="13" transform="matrix(1 0 0 1.1 0 -6.100)">G</text><text x="339.3" y="61" text-anchor="middle" fill="#000" color="#000" font-size="13" transform="matrix(1 0 0 1.1 0 -6.100)">T</text><text x="392.3" y="61" text-anchor="middle" fill="#000" color="#000" font-size="13" transform="matrix(1 0 0 1.1 0 -6.100)">T</text><text x="445.4" y="61" text-anchor="middle" fill="#000" color="#000" font-size="13" transform="matrix(1 0 0 1.1 0 -6.100)">T</text><text x="498" y="61" text-anchor="middle" fill="#000" color="#000" font-size="13" transform="matrix(1 0 0 1.1 0 -6.100)">C</text><text x="550.9" y="61" text-anchor="middle" fill="#000" color="#000" font-size="13" transform="matrix(1 0 0 1.1 0 -6.100)">C</text><text x="603.3" y="61" text-anchor="middle" fill="#000" color="#000" font-size="13" transform="matrix(1 0 0 1.1 0 -6.100)">T</text><text x="655.4" y="61" text-anchor="middle" fill="#000" color="#000" font-size="13" transform="matrix(1 0 0 1.1 0 -6.100)">A</text><text x="709.4" y="61" text-anchor="middle" fill="#000" color="#000" font-size="13" transform="matrix(1 0 0 1.1 0 -6.100)">T</text><text x="761.2" y="61" text-anchor="middle" fill="#000" color="#000" font-size="13" transform="matrix(1 0 0 1.1 0 -6.100)">C</text><text x="815.1" y="61" text-anchor="middle" fill="#000" color="#000" font-size="13" transform="matrix(1 0 0 1.1 0 -6.100)">T</text><text x="868" y="61" text-anchor="middle" fill="#000" color="#000" font-size="13" transform="matrix(1 0 0 1.1 0 -6.100)">G</text><text x="920.9" y="61" text-anchor="middle" fill="#000" color="#000" font-size="13" transform="matrix(1 0 0 1.1 0 -6.100)">T</text><text x="180.9" y="538" text-anchor="middle" fill="#0c0c78" color="#0c0c78" font-size="13" transform="matrix(1 0 0 1.1 0 -53.800)">C</text><text x="180.9" y="553" text-anchor="middle" fill="#0c0c78" color="#0c0c78" font-size="13" transform="matrix(1 0 0 1.1 0 -55.300)">C</text><text x="180.9" y="583" text-anchor="middle" fill="#0c0c78" color="#0c0c78" font-size="13" transform="matrix(1 0 0 1.1 0 -58.300)">C</text><text x="180.9" y="598" text-anchor="middle" fill="#0c0c78" color="#0c0c78" font-size="13" transform="matrix(1 0 0 1.1 0 -59.800)">C</text><text x="232.5" y="538" text-anchor="middle" fill="#0c0c78" color="#0c0c78" font-size="13" transform="matrix(1 0 0 1.1 0 -53.800)">A</text><text x="232.5" y="553" text-anchor="middle" fill="#0c0c78" color="#0c0c78" font-size="13" transform="matrix(1 0 0 1.1 0 -55.300)">A</text><text x="232.5" y="583" text-anchor="middle" fill="#0c0c78" color="#0c0c78" font-size="13" transform="matrix(1 0 0 1.1 0 -58.300)">A</text><text x="232.5" y="598" text-anchor="middle" fill="#0c0c78" color="#0c0c78" font-size="13" transform="matrix(1 0 0 1.1 0 -59.800)">A</text><text x="285.8" y="538" text-anchor="middle" fill="#0c0c78" color="#0c0c78" font-size="13" transform="matrix(1 0 0 1.1 0 -53.800)">G</text><text x="285.8" y="553" text-anchor="middle" fill="#0c0c78" color="#0c0c78" font-size="13" transform="matrix(1 0 0 1.1 0 -55.300)">G</text><text x="285.8" y="583" text-anchor="middle" fill="#0c0c78" color="#0c0c78" font-size="13" transform="matrix(1 0 0 1.1 0 -58.300)">G</text><text x="285.8" y="598" text-anchor="middle" fill="#0c0c78" color="#0c0c78" font-size="13" transform="matrix(1 0 0 1.1 0 -59.800)">G</text><text x="339.3" y="538" text-anchor="middle" fill="#0c0c78" color="#0c0c78" font-size="13" transform="matrix(1 0 0 1.1 0 -53.800)">T</text><text x="339.3" y="553" text-anchor="middle" fill="#0c0c78" color="#0c0c78" font-size="13" transform="matrix(1 0 0 1.1 0 -55.300)">T</text><text x="339.3" y="583" text-anchor="middle" fill="#0c0c78" color="#0c0c78" font-size="13" transform="matrix(1 0 0 1.1 0 -58.300)">T</text><text x="339.3" y="598" text-anchor="middle" fill="#0c0c78" color="#0c0c78" font-size="13" transform="matrix(1 0 0 1.1 0 -59.800)">T</text><text x="392.3" y="538" text-anchor="middle" fill="#0c0c78" color="#0c0c78" font-size="13" transform="matrix(1 0 0 1.1 0 -53.800)">T</text><text x="392.3" y="553" text-anchor="middle" fill="#0c0c78" color="#0c0c78" font-size="13" transform="matrix(1 0 0 1.1 0 -55.300)">T</text><text x="392.3" y="583" text-anchor="middle" fill="#0c0c78" color="#0c0c78" font-size="13" transform="matrix(1 0 0 1.1 0 -58.300)">T</text><text x="392.3" y="598" text-anchor="middle" fill="#0c0c78" color="#0c0c78" font-size="13" transform="matrix(1 0 0 1.1 0 -59.800)">T</text><text x="445.4" y="538" text-anchor="middle" fill="#0c0c78" color="#0c0c78" font-size="13" transform="matrix(1 0 0 1.1 0 -53.800)">T</text><text x="445.4" y="553" text-anchor="middle" fill="#0c0c78" color="#0c0c78" font-size="13" transform="matrix(1 0 0 1.1 0 -55.300)">T</text><text x="445.4" y="583" text-anchor="middle" fill="#0c0c78" color="#0c0c78" font-size="13" transform="matrix(1 0 0 1.1 0 -58.300)">T</text><text x="445.4" y="598" text-anchor="middle" fill="#0c0c78" color="#0c0c78" font-size="13" transform="matrix(1 0 0 1.1 0 -59.800)">T</text><text x="498" y="538" text-anchor="middle" fill="#0c0c78" color="#0c0c78" font-size="13" transform="matrix(1 0 0 1.1 0 -53.800)">C</text><text x="498" y="553" text-anchor="middle" fill="#0c0c78" color="#0c0c78" font-size="13" transform="matrix(1 0 0 1.1 0 -55.300)">C</text><text x="498" y="583" text-anchor="middle" fill="#0c0c78" color="#0c0c78" font-size="13" transform="matrix(1 0 0 1.1 0 -58.300)">C</text><text x="498" y="598" text-anchor="middle" fill="#0c0c78" color="#0c0c78" font-size="13" transform="matrix(1 0 0 1.1 0 -59.800)">C</text><text x="550.9" y="538" text-anchor="middle" fill="#0c0c78" color="#0c0c78" font-size="13" transform="matrix(1 0 0 1.1 0 -53.800)">C</text><text x="550.9" y="553" text-anchor="middle" fill="#0c0c78" color="#0c0c78" font-size="13" transform="matrix(1 0 0 1.1 0 -55.300)">C</text><text x="550.9" y="583" text-anchor="middle" fill="#0c0c78" color="#0c0c78" font-size="13" transform="matrix(1 0 0 1.1 0 -58.300)">C</text><text x="550.9" y="598" text-anchor="middle" fill="#0c0c78" color="#0c0c78" font-size="13" transform="matrix(1 0 0 1.1 0 -59.800)">C</text><text x="603.3" y="538" text-anchor="middle" fill="#0c0c78" color="#0c0c78" font-size="13" transform="matrix(1 0 0 1.1 0 -53.800)">T</text><text x="603.3" y="553" text-anchor="middle" fill="#0c0c78" color="#0c0c78" font-size="13" transform="matrix(1 0 0 1.1 0 -55.300)">T</text><text x="603.3" y="583" text-anchor="middle" fill="#8c8cb4" color="#8c8cb4" font-size="13" transform="matrix(1 0 0 1.1 0 -58.300)">C</text><text x="603.3" y="598" text-anchor="middle" fill="#0c0c78" color="#0c0c78" font-size="13" transform="matrix(1 0 0 1.1 0 -59.800)">T</text><text x="655.4" y="538" text-anchor="middle" fill="#0c0c78" color="#0c0c78" font-size="13" transform="matrix(1 0 0 1.1 0 -53.800)">A</text><text x="655.4" y="553" text-anchor="middle" fill="#0c0c78" color="#0c0c78" font-size="13" transform="matrix(1 0 0 1.1 0 -55.300)">A</text><text x="655.4" y="583" text-anchor="middle" fill="#0c0c78" color="#0c0c78" font-size="13" transform="matrix(1 0 0 1.1 0 -58.300)">A</text><text x="655.4" y="598" text-anchor="middle" fill="#8c8cb4" color="#8c8cb4" font-size="13" transform="matrix(1 0 0 1.1 0 -59.800)">G</text><text x="709.4" y="538" text-anchor="middle" fill="#0c0c78" color="#0c0c78" font-size="13" transform="matrix(1 0 0 1.1 0 -53.800)">T</text><text x="709.4" y="553" text-anchor="middle" fill="#0c0c78" color="#0c0c78" font-size="13" transform="matrix(1 0 0 1.1 0 -55.300)">T</text><text x="709.4" y="583" text-anchor="middle" fill="#0c0c78" color="#0c0c78" font-size="13" transform="matrix(1 0 0 1.1 0 -58.300)">T</text><text x="709.4" y="598" text-anchor="middle" fill="#0c0c78" color="#0c0c78" font-size="13" transform="matrix(1 0 0 1.1 0 -59.800)">T</text><text x="761.2" y="538" text-anchor="middle" fill="#0c0c78" color="#0c0c78" font-size="13" transform="matrix(1 0 0 1.1 0 -53.800)">C</text><text x="761.2" y="553" text-anchor="middle" fill="#0c0c78" color="#0c0c78" font-size="13" transform="matrix(1 0 0 1.1 0 -55.300)">C</text><text x="761.2" y="583" text-anchor="middle" fill="#0c0c78" color="#0c0c78" font-size="13" transform="matrix(1 0 0 1.1 0 -58.300)">C</text><text x="761.2" y="598" text-anchor="middle" fill="#0c0c78" color="#0c0c78" font-size="13" transform="matrix(1 0 0 1.1 0 -59.800)">C</text><text x="815.1" y="538" text-anchor="middle" fill="#0c0c78" color="#0c0c78" font-size="13" transform="matrix(1 0 0 1.1 0 -53.800)">T</text><text x="815.1" y="553" text-anchor="middle" fill="#8c8cb4" color="#8c8cb4" font-size="13" transform="matrix(1 0 0 1.1 0 -55.300)">C</text><text x="815.1" y="583" text-anchor="middle" fill="#0c0c78" color="#0c0c78" font-size="13" transform="matrix(1 0 0 1.1 0 -58.300)">T</text><text x="815.1" y="598" text-anchor="middle" fill="#0c0c78" color="#0c0c78" font-size="13" transform="matrix(1 0 0 1.1 0 -59.800)">T</text><text x="868" y="538" text-anchor="middle" fill="#0c0c78" color="#0c0c78" font-size="13" transform="matrix(1 0 0 1.1 0 -53.800)">G</text><text x="868" y="553" text-anchor="middle" fill="#0c0c78" color="#0c0c78" font-size="13" transform="matrix(1 0 0 1.1 0 -55.300)">G</text><text x="868" y="583" text-anchor="middle" fill="#8c8cb4" color="#8c8cb4" font-size="13" transform="matrix(1 0 0 1.1 0 -58.300)">A</text><text x="868" y="598" text-anchor="middle" fill="#8c8cb4" color="#8c8cb4" font-size="13" transform="matrix(1 0 0 1.1 0 -59.800)">A</text><text x="920.9" y="538" text-anchor="middle" fill="#0c0c78" color="#0c0c78" font-size="13" transform="matrix(1 0 0 1.1 0 -53.800)">T</text><text x="920.9" y="553" text-anchor="middle" fill="#8c8cb4" color="#8c8cb4" font-size="13" transform="matrix(1 0 0 1.1 0 -55.300)">C</text><text x="920.9" y="583" text-anchor="middle" fill="#0c0c78" color="#0c0c78" font-size="13" transform="matrix(1 0 0 1.1 0 -58.300)">T</text><text x="920.9" y="598" text-anchor="middle" fill="#0c0c78" color="#0c0c78" font-size="13" transform="matrix(1 0 0 1.1 0 -59.800)">T</text>
</svg>
</body></html>
